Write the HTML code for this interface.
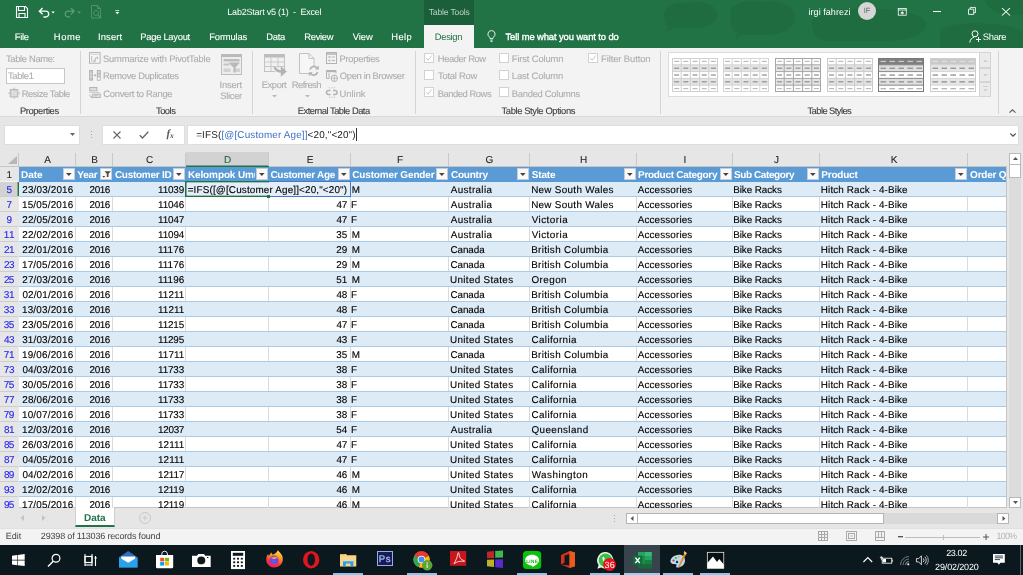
<!DOCTYPE html><html><head><meta charset="utf-8"><title>Lab2Start v5 (1) - Excel</title><style>
*{box-sizing:border-box;margin:0;padding:0}
html,body{width:1023px;height:575px;overflow:hidden;background:#e6e6e6}
body{position:relative;font-family:"Liberation Sans",Arial,sans-serif;font-size:9px;color:#444;text-rendering:geometricPrecision}
.a{position:absolute;white-space:nowrap}
.t{position:absolute;white-space:pre}
.cell{position:absolute;white-space:nowrap;font-size:10px;line-height:16px;height:14px;color:#000;letter-spacing:0;word-spacing:1px}
.hd{position:absolute;white-space:nowrap;font-size:10px;line-height:16px;height:14px;color:#fff;font-weight:bold;letter-spacing:-0.25px;overflow:hidden}
.rn{position:absolute;left:0;width:18px;text-align:center;font-size:10px;line-height:16px;height:14px;color:#2a2ae8}
.ch{position:absolute;top:153px;height:15px;line-height:15px;text-align:center;font-size:10px;color:#262626;-webkit-text-stroke:0.1px #262626}
.fb{position:absolute;width:12px;height:12px;background:#fafafa;border:1px solid #c4cdd8}

svg{position:absolute;overflow:visible}
</style></head><body><div id="root" style="position:absolute;left:0;top:0;width:1023px;height:575px;will-change:transform">
<div class="a" style="left:0;top:0;width:1023px;height:48px;background:#217346"></div>
<svg style="left:0;top:0" width="1023" height="48" viewBox="0 0 1023 48"><g fill="#1d6a3f" opacity=".75"><path d="M664 14c0-9 14-13 24-11c10-3 28 0 29 10c2 8-8 14-20 15h-24l-6 4l1-6c-3-2-4-7-4-12z"/><path d="M730 12c2-10 22-14 34-10c14-3 30 2 31 14c1 10-10 18-26 19h-28l-5 4l1-6c-5-3-8-13-7-21z"/><path d="M812 22c0-8 18-14 40-13c30-2 72 2 74 14c2 10-14 17-40 18h-60c-10 0-14-10-14-19z"/><path d="M940 30c6-6 30-8 50-6c14 0 28 4 33 8v16h-83z"/><path d="M985 0h38v14c-14 2-34 0-38-14z"/></g></svg>
<div class="a" style="left:424px;top:0;width:50px;height:25px;background:#1b5f3a"></div>
<div class="a" style="left:424px;top:25px;width:50px;height:23px;background:#f3f3f3"></div>
<div class="t" style="left:428.76px;top:6.00px;font-size:8.6px;line-height:12px;height:12px;color:#b9d2c3;letter-spacing:-0.175px;">Table Tools</div>
<div class="t" style="left:227.34px;top:6.00px;font-size:9px;line-height:12px;height:12px;color:#fff;letter-spacing:-0.212px;">Lab2Start v5 (1)  -  Excel</div>
<div class="t" style="left:808.49px;top:6.00px;font-size:9px;line-height:12px;height:12px;color:#fff;letter-spacing:0.049px;">irgi fahrezi</div>
<div class="a" style="left:858px;top:2px;width:18px;height:18px;border-radius:9px;background:#d6d6d6;color:#6a6a6a;font-size:7.5px;line-height:18px;text-align:center">IF</div>
<div class="t" style="left:14.80px;top:31.00px;font-size:9.4px;line-height:12px;height:12px;color:#fff;letter-spacing:-0.332px;-webkit-text-stroke:0.1px #fff;">File</div>
<div class="t" style="left:53.80px;top:31.00px;font-size:9.4px;line-height:12px;height:12px;color:#fff;letter-spacing:0.578px;-webkit-text-stroke:0.1px #fff;">Home</div>
<div class="t" style="left:97.91px;top:31.00px;font-size:9.4px;line-height:12px;height:12px;color:#fff;letter-spacing:0.169px;-webkit-text-stroke:0.1px #fff;">Insert</div>
<div class="t" style="left:140.30px;top:31.00px;font-size:9.4px;line-height:12px;height:12px;color:#fff;letter-spacing:-0.273px;-webkit-text-stroke:0.1px #fff;">Page Layout</div>
<div class="t" style="left:209.30px;top:31.00px;font-size:9.4px;line-height:12px;height:12px;color:#fff;letter-spacing:-0.181px;-webkit-text-stroke:0.1px #fff;">Formulas</div>
<div class="t" style="left:266.30px;top:31.00px;font-size:9.4px;line-height:12px;height:12px;color:#fff;letter-spacing:-0.268px;-webkit-text-stroke:0.1px #fff;">Data</div>
<div class="t" style="left:304.30px;top:31.00px;font-size:9.4px;line-height:12px;height:12px;color:#fff;letter-spacing:-0.322px;-webkit-text-stroke:0.1px #fff;">Review</div>
<div class="t" style="left:352.69px;top:31.00px;font-size:9.4px;line-height:12px;height:12px;color:#fff;letter-spacing:-0.048px;-webkit-text-stroke:0.1px #fff;">View</div>
<div class="t" style="left:391.30px;top:31.00px;font-size:9.4px;line-height:12px;height:12px;color:#fff;letter-spacing:0.417px;-webkit-text-stroke:0.1px #fff;">Help</div>
<div class="t" style="left:434.80px;top:31.00px;font-size:9.4px;line-height:12px;height:12px;color:#217346;letter-spacing:-0.312px;">Design</div>
<div class="t" style="left:505.50px;top:31.00px;font-size:9.4px;line-height:12px;height:12px;color:#fff;letter-spacing:-0.091px;-webkit-text-stroke:0.35px #fff;">Tell me what you want to do</div>
<div class="t" style="left:982.81px;top:31.00px;font-size:9.4px;line-height:12px;height:12px;color:#fff;letter-spacing:-0.319px;">Share</div>
<svg style="left:16px;top:6px" width="12" height="12" viewBox="0 0 12 12"><path d="M.5.5h9l2 2v9h-11z M2.5.5v4h6v-4 M3 11.500v-4h6v4" fill="none" stroke="#fff" stroke-width="1.1"/></svg>
<svg style="left:37.500px;top:7px" width="18.300" height="11" viewBox="0 0 20 12"><path d="M5 1L1.500 4.500L5 8 M1.500 4.500H8.500a3.200 3.200 0 0 1 0 6.400H6" fill="none" stroke="#fff" stroke-width="1.5"/><path d="M14.500 5h4l-2 2.200z" fill="#fff"/></svg>
<svg style="left:64px;top:7px" width="18.300" height="11" viewBox="0 0 20 12"><path d="M7.500 1L11 4.500L7.500 8 M11 4.500H4.500a3.200 3.200 0 0 0 0 6.400H6.500" fill="none" stroke="#5f9c7a" stroke-width="1.4"/><path d="M14.500 5h4l-2 2.200z" fill="#5f9c7a"/></svg>
<svg style="left:91px;top:5px" width="12" height="14" viewBox="0 0 12 14"><path d="M.5.5h6l3 3v9.500h-9z M6.500.5v3h3" fill="none" stroke="#4f9070" stroke-width="1"/><circle cx="5" cy="8" r="2.500" fill="none" stroke="#4f9070"/><path d="M7 10l3 3" stroke="#4f9070" stroke-width="1.200"/></svg>
<svg style="left:115px;top:10px" width="4.600" height="5" viewBox="0 0 6 6"><path d="M.5.5h5" stroke="#fff" stroke-width="1"/><path d="M.5 2.500h5l-2.500 2.800z" fill="#fff"/></svg>
<svg style="left:896.500px;top:7.500px" width="10.500" height="8" viewBox="0 0 11 10"><rect x=".5" y=".5" width="10" height="8.500" fill="none" stroke="#fff"/><path d="M.5 2.500h10" stroke="#fff"/><path d="M3.500 6.500L5.500 4.500L7.500 6.500z M5.500 5v3.500" fill="#fff" stroke="#fff" stroke-width=".8"/></svg>
<div class="a" style="left:933px;top:11px;width:8px;height:1px;background:#fff"></div>
<svg style="left:967.500px;top:7.300px" width="8" height="7.800" viewBox="0 0 9 9"><path d="M.5 2.500h6v6h-6z M2.500 2.500v-2h6v6h-2" fill="none" stroke="#fff" stroke-width="1"/></svg>
<svg style="left:1002px;top:7.600px" width="8" height="7.500" viewBox="0 0 8 8" preserveAspectRatio="none"><path d="M0 0L8 8M8 0L0 8" stroke="#fff" stroke-width="1.1"/></svg>
<svg style="left:486.700px;top:30.300px" width="9" height="12.500" viewBox="0 0 9 13"><path d="M4.500.6a3.700 3.700 0 0 0-2.200 6.700c.5.500.7 1 .7 1.700h3c0-.7.200-1.200.7-1.700A3.700 3.700 0 0 0 4.500.6z M3.200 10.500h2.600 M3.500 12h2" fill="none" stroke="#fff" stroke-width=".9"/></svg>
<svg style="left:969px;top:30px" width="13" height="13" viewBox="0 0 13 13"><circle cx="6" cy="3.800" r="3" fill="none" stroke="#fff"/><path d="M.8 12.500c.3-3 2-4.800 4.200-5.200 M9.500 7v5 M7 9.500h5" fill="none" stroke="#fff"/></svg>
<div class="a" style="left:0;top:48px;width:1023px;height:69px;background:#f3f3f3;border-bottom:1px solid #dadada"></div>
<div class="a" style="left:80px;top:51px;width:1px;height:63px;background:#d4d4d4"></div>
<div class="a" style="left:252px;top:51px;width:1px;height:63px;background:#d4d4d4"></div>
<div class="a" style="left:415px;top:51px;width:1px;height:63px;background:#d4d4d4"></div>
<div class="a" style="left:660px;top:51px;width:1px;height:63px;background:#d4d4d4"></div>
<div class="a" style="left:998px;top:51px;width:1px;height:63px;background:#d4d4d4"></div>
<div class="t" style="left:6.00px;top:53.00px;font-size:9.4px;line-height:12px;height:12px;color:#adadad;letter-spacing:-0.344px;-webkit-text-stroke:0.1px #adadad;">Table Name:</div>
<div class="a" style="left:6px;top:68px;width:59px;height:16px;background:#fff;border:1px solid #c8c8c8"></div>
<div class="t" style="left:8.00px;top:70.00px;font-size:9.4px;line-height:12px;height:12px;color:#adadad;letter-spacing:-0.348px;-webkit-text-stroke:0.1px #adadad;">Table1</div>
<div class="t" style="left:21.80px;top:88.00px;font-size:9.4px;line-height:12px;height:12px;color:#adadad;letter-spacing:-0.456px;-webkit-text-stroke:0.1px #adadad;">Resize Table</div>
<div class="t" style="left:19.90px;top:105.00px;font-size:9.4px;line-height:12px;height:12px;color:#404040;letter-spacing:-0.394px;-webkit-text-stroke:0.12px #444;">Properties</div>
<svg style="left:8px;top:86.500px" width="13" height="12" viewBox="0 0 13 12"><rect x="2.300" y="2.500" width="7.600" height="7.500" fill="#d0d0d0" stroke="#b8b8b8" stroke-width=".9"/><path d="M4.300 4v5M6.100 4v5M7.900 4v5" stroke="#ececec" stroke-width=".8"/><path d="M0 6.200l1.800-1.300v2.600z M12.300 6.200l-1.600-1.200v2.400z M6.100 .3l1.300 1.500h-2.600z M6.100 12l1.300-1.500h-2.600z" fill="#bdbdbd"/></svg>
<div class="t" style="left:103.01px;top:53.00px;font-size:9.4px;line-height:12px;height:12px;color:#adadad;letter-spacing:-0.205px;-webkit-text-stroke:0.1px #adadad;">Summarize with PivotTable</div>
<div class="t" style="left:103.00px;top:70.00px;font-size:9.4px;line-height:12px;height:12px;color:#adadad;letter-spacing:-0.329px;-webkit-text-stroke:0.1px #adadad;">Remove Duplicates</div>
<div class="t" style="left:103.31px;top:88.00px;font-size:9.4px;line-height:12px;height:12px;color:#adadad;letter-spacing:-0.282px;-webkit-text-stroke:0.1px #adadad;">Convert to Range</div>
<div class="t" style="left:156.00px;top:105.00px;font-size:9.4px;line-height:12px;height:12px;color:#404040;letter-spacing:-0.515px;-webkit-text-stroke:0.12px #444;">Tools</div>
<svg style="left:89px;top:52.400px" width="11.600" height="11.800" viewBox="0 0 12 12"><rect x=".5" y=".5" width="11" height="11" fill="#f7f7f7" stroke="#b3b3b3"/><path d="M2 2.300h8" stroke="#c2c2c2" stroke-width="1" stroke-dasharray="1.500 .7"/><path d="M2.800 4v6" stroke="#c2c2c2" stroke-width="1.200"/><path d="M4.500 9.500h2v-3.500h3" fill="none" stroke="#b3b3b3" stroke-width=".9"/><path d="M8.600 4.600v2.800M5.500 8v2.600" stroke="#b3b3b3" stroke-width=".9"/></svg>
<svg style="left:89px;top:70.200px" width="11.800" height="10.600" viewBox="0 0 12 11"><rect x=".5" y=".5" width="3" height="10" fill="#c9c9c9" stroke="#b3b3b3"/><path d="M.5 3.800h3M.5 7.200h3" stroke="#e4e4e4" stroke-width=".8"/><rect x="8.500" y=".5" width="3" height="10" fill="#d6d6d6" stroke="#b3b3b3"/><rect x="9" y="7.500" width="2" height="2.500" fill="#fff"/><path d="M8.500 3.800h3M8.500 7.200h3" stroke="#b3b3b3" stroke-width=".8"/><path d="M5 5.500h2.500M6.200 4.200v2.600" stroke="#b3b3b3" stroke-width=".9"/></svg>
<svg style="left:89px;top:87px" width="12" height="11.500" viewBox="0 0 12 12"><rect x=".5" y=".5" width="7.500" height="3.500" fill="#d9d9d9" stroke="#b3b3b3"/><path d="M2 2.200h1.500M5 2.200l1 1l1-1" stroke="#f3f3f3" stroke-width=".8" fill="none"/><path d="M0 5.800h11" stroke="#c8c8c8" stroke-width=".9"/><rect x="3.500" y="7.500" width="8" height="3.500" fill="#e6e6e6" stroke="#b3b3b3"/><path d="M5 9.200h4" stroke="#b3b3b3" stroke-width=".9"/><path d="M.6 8c0 2 .8 2.600 2.400 2.600M2 9.500l1.200 1.100l-1.200 1.100" stroke="#b3b3b3" stroke-width=".9" fill="none"/></svg>
<svg style="left:221px;top:54px" width="21" height="21" viewBox="0 0 21 21"><rect x=".5" y=".5" width="20" height="20" fill="#ededed" stroke="#bdbdbd"/><rect x=".5" y=".5" width="20" height="2.500" fill="#b9b9b9"/><rect x="2.500" y="5" width="16" height="2.500" fill="#bdbdbd"/><rect x="2.500" y="9.500" width="6" height="2" fill="#c4c4c4"/><rect x="2.500" y="14.500" width="7" height="3.500" fill="#d2d2d2"/><rect x="14" y="14.500" width="5" height="3.500" fill="#d2d2d2"/><path d="M7.500 8.500h11.500l-4.500 5v5h-2v-5z" fill="#b9b9b9"/></svg>
<div class="t" style="left:219.51px;top:79.00px;font-size:9.4px;line-height:12px;height:12px;color:#adadad;letter-spacing:-0.151px;-webkit-text-stroke:0.1px #adadad;">Insert</div>
<div class="t" style="left:220.31px;top:90.00px;font-size:9.4px;line-height:12px;height:12px;color:#adadad;letter-spacing:-0.304px;-webkit-text-stroke:0.1px #adadad;">Slicer</div>
<svg style="left:264px;top:54px" width="23" height="22" viewBox="0 0 23 22"><rect x=".5" y=".5" width="20" height="17" fill="#f1f1f1" stroke="#c2c2c2"/><rect x=".5" y=".5" width="20" height="3" fill="#bcbcbc"/><path d="M.5 8h20M.5 12.500h20M7 3.500v14M14 3.500v14" stroke="#c9c9c9"/><path d="M10.500 13c1.500 3.800 4 4.800 8 4.500" fill="none" stroke="#f3f3f3" stroke-width="4.500"/><path d="M10.500 13c1.500 3.800 4 4.800 8 4.500" fill="none" stroke="#b2b2b2" stroke-width="2.300"/><path d="M16.800 12.300l6 5.200l-6 5.200z" fill="#b2b2b2"/></svg>
<div class="t" style="left:261.80px;top:79.00px;font-size:9.4px;line-height:12px;height:12px;color:#adadad;letter-spacing:-0.440px;-webkit-text-stroke:0.1px #adadad;">Export</div>
<svg style="left:272px;top:95px" width="5" height="3" viewBox="0 0 5 3"><path d="M0 0h5l-2.500 2.500z" fill="#b9b9b9"/></svg>
<svg style="left:299px;top:53px" width="21" height="24" viewBox="0 0 21 24"><path d="M.5.500h9.500l5 5v15h-14.500z" fill="#f6f6f6" stroke="#c2c2c2"/><path d="M10 .5v5h5" fill="none" stroke="#c2c2c2"/><circle cx="14.800" cy="17.700" r="4.800" fill="#f3f3f3"/><path d="M11 16.500a4 4 0 0 1 7-1.500 M18.600 19a4 4 0 0 1-7 1.500" fill="none" stroke="#b3b3b3" stroke-width="1.700"/><path d="M19.800 12.500v4h-4z M9.800 23.200v-4h4z" fill="#b3b3b3"/></svg>
<div class="t" style="left:291.80px;top:79.00px;font-size:9.4px;line-height:12px;height:12px;color:#adadad;letter-spacing:-0.520px;-webkit-text-stroke:0.1px #adadad;">Refresh</div>
<svg style="left:304.500px;top:95px" width="5" height="3" viewBox="0 0 5 3"><path d="M0 0h5l-2.500 2.500z" fill="#b9b9b9"/></svg>
<svg style="left:326px;top:52px" width="11" height="12" viewBox="0 0 11 12"><rect x=".5" y=".5" width="10" height="11" fill="none" stroke="#b3b3b3"/><path d="M.5 2h10" stroke="#b3b3b3" stroke-width="1.500"/><path d="M2.500 5h2M2.500 8.500h2" stroke="#b3b3b3" stroke-width="1.600"/><path d="M5.800 5h3M5.800 8.500h3" stroke="#b3b3b3"/></svg>
<div class="t" style="left:339.50px;top:53.00px;font-size:9.4px;line-height:12px;height:12px;color:#adadad;letter-spacing:-0.272px;-webkit-text-stroke:0.1px #adadad;">Properties</div>
<svg style="left:326px;top:70px" width="12" height="12" viewBox="0 0 12 12"><path d="M.5 8.500v-8h9.500v3" fill="none" stroke="#b3b3b3"/><path d="M.5 1.500h9.500" stroke="#b3b3b3" stroke-width="1.500"/><path d="M3 3v5.500H.5" fill="none" stroke="#b3b3b3"/><circle cx="8.300" cy="8.300" r="3.200" fill="#f3f3f3" stroke="#b3b3b3"/><path d="M5.100 8.300h6.400M8.300 5.100v6.400" stroke="#b3b3b3" stroke-width=".8"/></svg>
<div class="t" style="left:339.84px;top:70.00px;font-size:9.4px;line-height:12px;height:12px;color:#adadad;letter-spacing:-0.344px;-webkit-text-stroke:0.1px #adadad;">Open in Browser</div>
<svg style="left:326px;top:87px" width="12" height="11" viewBox="0 0 12 11"><path d="M4.500 3.500h-2a2 2 0 0 0 0 4h2 M7 3.500h2a2 2 0 0 1 0 4h-2" fill="none" stroke="#b3b3b3" stroke-width="1.600"/><path d="M4 1.500L3 0M6 1.300V0M8 1.500L9 0M4 9.500L3 11M6 9.700V11M8 9.500L9 11" stroke="#c0c0c0" stroke-width=".9"/></svg>
<div class="t" style="left:339.56px;top:88.00px;font-size:9.4px;line-height:12px;height:12px;color:#adadad;letter-spacing:-0.013px;-webkit-text-stroke:0.1px #adadad;">Unlink</div>
<div class="t" style="left:297.80px;top:105.00px;font-size:9.4px;line-height:12px;height:12px;color:#404040;letter-spacing:-0.517px;-webkit-text-stroke:0.12px #444;">External Table Data</div>
<div class="a" style="left:424px;top:53px;width:10px;height:10px;background:#fff;border:1px solid #d2d2d2"></div>
<svg style="left:424px;top:53px" width="10" height="10" viewBox="0 0 10 10"><path d="M2.200 5.200L4 7.200L7.800 2.500" fill="none" stroke="#c4c4c4" stroke-width="1"/></svg>
<div class="a" style="left:424px;top:70px;width:10px;height:10px;background:#fff;border:1px solid #d2d2d2"></div>
<div class="a" style="left:424px;top:87px;width:10px;height:10px;background:#fff;border:1px solid #d2d2d2"></div>
<svg style="left:424px;top:87px" width="10" height="10" viewBox="0 0 10 10"><path d="M2.200 5.200L4 7.200L7.800 2.500" fill="none" stroke="#c4c4c4" stroke-width="1"/></svg>
<div class="t" style="left:437.80px;top:53.00px;font-size:9.4px;line-height:12px;height:12px;color:#adadad;letter-spacing:-0.421px;-webkit-text-stroke:0.1px #adadad;">Header Row</div>
<div class="t" style="left:438.00px;top:70.00px;font-size:9.4px;line-height:12px;height:12px;color:#adadad;letter-spacing:-0.245px;-webkit-text-stroke:0.1px #adadad;">Total Row</div>
<div class="t" style="left:437.80px;top:88.00px;font-size:9.4px;line-height:12px;height:12px;color:#adadad;letter-spacing:-0.460px;-webkit-text-stroke:0.1px #adadad;">Banded Rows</div>
<div class="a" style="left:499px;top:53px;width:10px;height:10px;background:#fff;border:1px solid #d2d2d2"></div>
<div class="a" style="left:499px;top:70px;width:10px;height:10px;background:#fff;border:1px solid #d2d2d2"></div>
<div class="a" style="left:499px;top:87px;width:10px;height:10px;background:#fff;border:1px solid #d2d2d2"></div>
<div class="t" style="left:511.80px;top:53.00px;font-size:9.4px;line-height:12px;height:12px;color:#adadad;letter-spacing:-0.142px;-webkit-text-stroke:0.1px #adadad;">First Column</div>
<div class="t" style="left:511.80px;top:70.00px;font-size:9.4px;line-height:12px;height:12px;color:#adadad;letter-spacing:-0.122px;-webkit-text-stroke:0.1px #adadad;">Last Column</div>
<div class="t" style="left:511.80px;top:88.00px;font-size:9.4px;line-height:12px;height:12px;color:#adadad;letter-spacing:-0.266px;-webkit-text-stroke:0.1px #adadad;">Banded Columns</div>
<div class="a" style="left:588px;top:53px;width:10px;height:10px;background:#fff;border:1px solid #d2d2d2"></div>
<svg style="left:588px;top:53px" width="10" height="10" viewBox="0 0 10 10"><path d="M2.200 5.200L4 7.200L7.800 2.500" fill="none" stroke="#c4c4c4" stroke-width="1"/></svg>
<div class="t" style="left:601.00px;top:53.00px;font-size:9.4px;line-height:12px;height:12px;color:#adadad;letter-spacing:-0.083px;-webkit-text-stroke:0.1px #adadad;">Filter Button</div>
<div class="t" style="left:501.50px;top:105.00px;font-size:9.4px;line-height:12px;height:12px;color:#404040;letter-spacing:-0.381px;-webkit-text-stroke:0.12px #444;">Table Style Options</div>
<div class="a" style="left:668px;top:52px;width:323px;height:45px;background:#fff;border:1px solid #dcdcdc"></div>
<svg style="left:672px;top:58px" width="46" height="34" viewBox="0 0 46 34"><rect x="0" y="6.8" width="46" height="6.8" fill="#e4e4e4"/><rect x="0" y="20.4" width="46" height="6.8" fill="#e4e4e4"/><path d="M0 0.5h46" stroke="#d0d0d0" stroke-width="1"/><path d="M0 6.8h46" stroke="#d0d0d0" stroke-width="1"/><path d="M0 13.6h46" stroke="#d0d0d0" stroke-width="1"/><path d="M0 20.4h46" stroke="#d0d0d0" stroke-width="1"/><path d="M0 27.2h46" stroke="#d0d0d0" stroke-width="1"/><path d="M0 33.5h46" stroke="#d0d0d0" stroke-width="1"/><path d="M0.5 0v34" stroke="#d0d0d0" stroke-width="1"/><path d="M9.2 0v34" stroke="#d0d0d0" stroke-width="1"/><path d="M18.4 0v34" stroke="#d0d0d0" stroke-width="1"/><path d="M27.6 0v34" stroke="#d0d0d0" stroke-width="1"/><path d="M36.8 0v34" stroke="#d0d0d0" stroke-width="1"/><path d="M45.5 0v34" stroke="#d0d0d0" stroke-width="1"/><rect x="2.1" y="2.8" width="5" height="1.200" fill="#bdbdbd"/><rect x="11.3" y="2.8" width="5" height="1.200" fill="#bdbdbd"/><rect x="20.5" y="2.8" width="5" height="1.200" fill="#bdbdbd"/><rect x="29.7" y="2.8" width="5" height="1.200" fill="#bdbdbd"/><rect x="38.9" y="2.8" width="5" height="1.200" fill="#bdbdbd"/><rect x="2.1" y="9.6" width="5" height="1.200" fill="#8f8f8f"/><rect x="11.3" y="9.6" width="5" height="1.200" fill="#8f8f8f"/><rect x="20.5" y="9.6" width="5" height="1.200" fill="#8f8f8f"/><rect x="29.7" y="9.6" width="5" height="1.200" fill="#8f8f8f"/><rect x="38.9" y="9.6" width="5" height="1.200" fill="#8f8f8f"/><rect x="2.1" y="16.4" width="5" height="1.200" fill="#8f8f8f"/><rect x="11.3" y="16.4" width="5" height="1.200" fill="#8f8f8f"/><rect x="20.5" y="16.4" width="5" height="1.200" fill="#8f8f8f"/><rect x="29.7" y="16.4" width="5" height="1.200" fill="#8f8f8f"/><rect x="38.9" y="16.4" width="5" height="1.200" fill="#8f8f8f"/><rect x="2.1" y="23.2" width="5" height="1.200" fill="#8f8f8f"/><rect x="11.3" y="23.2" width="5" height="1.200" fill="#8f8f8f"/><rect x="20.5" y="23.2" width="5" height="1.200" fill="#8f8f8f"/><rect x="29.7" y="23.2" width="5" height="1.200" fill="#8f8f8f"/><rect x="38.9" y="23.2" width="5" height="1.200" fill="#8f8f8f"/><rect x="2.1" y="30.0" width="5" height="1.200" fill="#bdbdbd"/><rect x="11.3" y="30.0" width="5" height="1.200" fill="#bdbdbd"/><rect x="20.5" y="30.0" width="5" height="1.200" fill="#bdbdbd"/><rect x="29.7" y="30.0" width="5" height="1.200" fill="#bdbdbd"/><rect x="38.9" y="30.0" width="5" height="1.200" fill="#bdbdbd"/></svg>
<svg style="left:723px;top:58px" width="46" height="34" viewBox="0 0 46 34"><rect x="0" y="6.8" width="46" height="6.8" fill="#e4e4e4"/><rect x="0" y="20.4" width="46" height="6.8" fill="#e4e4e4"/><rect x="0" y="0" width="46" height="34" fill="none"/><path d="M0 0.5h46" stroke="#d6d6d6" stroke-width="1"/><path d="M0 6.8h46" stroke="#d6d6d6" stroke-width="1"/><path d="M0 13.6h46" stroke="#d6d6d6" stroke-width="1"/><path d="M0 20.4h46" stroke="#d6d6d6" stroke-width="1"/><path d="M0 27.2h46" stroke="#d6d6d6" stroke-width="1"/><path d="M0 33.5h46" stroke="#d6d6d6" stroke-width="1"/><path d="M0.5 0v34" stroke="#d6d6d6" stroke-width="1"/><path d="M9.2 0v34" stroke="#d6d6d6" stroke-width="1"/><path d="M18.4 0v34" stroke="#d6d6d6" stroke-width="1"/><path d="M27.6 0v34" stroke="#d6d6d6" stroke-width="1"/><path d="M36.8 0v34" stroke="#d6d6d6" stroke-width="1"/><path d="M45.5 0v34" stroke="#d6d6d6" stroke-width="1"/><rect x="2.1" y="2.8" width="5" height="1.200" fill="#bdbdbd"/><rect x="11.3" y="2.8" width="5" height="1.200" fill="#bdbdbd"/><rect x="20.5" y="2.8" width="5" height="1.200" fill="#bdbdbd"/><rect x="29.7" y="2.8" width="5" height="1.200" fill="#bdbdbd"/><rect x="38.9" y="2.8" width="5" height="1.200" fill="#bdbdbd"/><rect x="2.1" y="9.6" width="5" height="1.200" fill="#8f8f8f"/><rect x="11.3" y="9.6" width="5" height="1.200" fill="#8f8f8f"/><rect x="20.5" y="9.6" width="5" height="1.200" fill="#8f8f8f"/><rect x="29.7" y="9.6" width="5" height="1.200" fill="#8f8f8f"/><rect x="38.9" y="9.6" width="5" height="1.200" fill="#8f8f8f"/><rect x="2.1" y="16.4" width="5" height="1.200" fill="#8f8f8f"/><rect x="11.3" y="16.4" width="5" height="1.200" fill="#8f8f8f"/><rect x="20.5" y="16.4" width="5" height="1.200" fill="#8f8f8f"/><rect x="29.7" y="16.4" width="5" height="1.200" fill="#8f8f8f"/><rect x="38.9" y="16.4" width="5" height="1.200" fill="#8f8f8f"/><rect x="2.1" y="23.2" width="5" height="1.200" fill="#8f8f8f"/><rect x="11.3" y="23.2" width="5" height="1.200" fill="#8f8f8f"/><rect x="20.5" y="23.2" width="5" height="1.200" fill="#8f8f8f"/><rect x="29.7" y="23.2" width="5" height="1.200" fill="#8f8f8f"/><rect x="38.9" y="23.2" width="5" height="1.200" fill="#8f8f8f"/><rect x="2.1" y="30.0" width="5" height="1.200" fill="#bdbdbd"/><rect x="11.3" y="30.0" width="5" height="1.200" fill="#bdbdbd"/><rect x="20.5" y="30.0" width="5" height="1.200" fill="#bdbdbd"/><rect x="29.7" y="30.0" width="5" height="1.200" fill="#bdbdbd"/><rect x="38.9" y="30.0" width="5" height="1.200" fill="#bdbdbd"/></svg>
<svg style="left:775px;top:58px" width="46" height="34" viewBox="0 0 46 34"><rect x="0" y="6.8" width="46" height="6.8" fill="#e4e4e4"/><rect x="0" y="20.4" width="46" height="6.8" fill="#e4e4e4"/><path d="M0 0.5h46" stroke="#a6a6a6" stroke-width="1"/><path d="M0 6.8h46" stroke="#a6a6a6" stroke-width="1"/><path d="M0 13.6h46" stroke="#a6a6a6" stroke-width="1"/><path d="M0 20.4h46" stroke="#a6a6a6" stroke-width="1"/><path d="M0 27.2h46" stroke="#a6a6a6" stroke-width="1"/><path d="M0 33.5h46" stroke="#a6a6a6" stroke-width="1"/><path d="M0.5 0v34" stroke="#a6a6a6" stroke-width="1"/><path d="M9.2 0v34" stroke="#a6a6a6" stroke-width="1"/><path d="M18.4 0v34" stroke="#a6a6a6" stroke-width="1"/><path d="M27.6 0v34" stroke="#a6a6a6" stroke-width="1"/><path d="M36.8 0v34" stroke="#a6a6a6" stroke-width="1"/><path d="M45.5 0v34" stroke="#a6a6a6" stroke-width="1"/><rect x="2.1" y="2.8" width="5" height="1.200" fill="#bdbdbd"/><rect x="11.3" y="2.8" width="5" height="1.200" fill="#bdbdbd"/><rect x="20.5" y="2.8" width="5" height="1.200" fill="#bdbdbd"/><rect x="29.7" y="2.8" width="5" height="1.200" fill="#bdbdbd"/><rect x="38.9" y="2.8" width="5" height="1.200" fill="#bdbdbd"/><rect x="2.1" y="9.6" width="5" height="1.200" fill="#8f8f8f"/><rect x="11.3" y="9.6" width="5" height="1.200" fill="#8f8f8f"/><rect x="20.5" y="9.6" width="5" height="1.200" fill="#8f8f8f"/><rect x="29.7" y="9.6" width="5" height="1.200" fill="#8f8f8f"/><rect x="38.9" y="9.6" width="5" height="1.200" fill="#8f8f8f"/><rect x="2.1" y="16.4" width="5" height="1.200" fill="#8f8f8f"/><rect x="11.3" y="16.4" width="5" height="1.200" fill="#8f8f8f"/><rect x="20.5" y="16.4" width="5" height="1.200" fill="#8f8f8f"/><rect x="29.7" y="16.4" width="5" height="1.200" fill="#8f8f8f"/><rect x="38.9" y="16.4" width="5" height="1.200" fill="#8f8f8f"/><rect x="2.1" y="23.2" width="5" height="1.200" fill="#8f8f8f"/><rect x="11.3" y="23.2" width="5" height="1.200" fill="#8f8f8f"/><rect x="20.5" y="23.2" width="5" height="1.200" fill="#8f8f8f"/><rect x="29.7" y="23.2" width="5" height="1.200" fill="#8f8f8f"/><rect x="38.9" y="23.2" width="5" height="1.200" fill="#8f8f8f"/><rect x="2.1" y="30.0" width="5" height="1.200" fill="#bdbdbd"/><rect x="11.3" y="30.0" width="5" height="1.200" fill="#bdbdbd"/><rect x="20.5" y="30.0" width="5" height="1.200" fill="#bdbdbd"/><rect x="29.7" y="30.0" width="5" height="1.200" fill="#bdbdbd"/><rect x="38.9" y="30.0" width="5" height="1.200" fill="#bdbdbd"/></svg>
<svg style="left:827px;top:58px" width="46" height="34" viewBox="0 0 46 34"><rect x="0" y="6.8" width="46" height="6.8" fill="#e4e4e4"/><rect x="0" y="20.4" width="46" height="6.8" fill="#e4e4e4"/><rect x="0" y="0" width="46" height="34" fill="none"/><path d="M0 0.5h46" stroke="#cacaca" stroke-width="1"/><path d="M0 6.8h46" stroke="#cacaca" stroke-width="1"/><path d="M0 13.6h46" stroke="#cacaca" stroke-width="1"/><path d="M0 20.4h46" stroke="#cacaca" stroke-width="1"/><path d="M0 27.2h46" stroke="#cacaca" stroke-width="1"/><path d="M0 33.5h46" stroke="#cacaca" stroke-width="1"/><path d="M0.5 0v34" stroke="#cacaca" stroke-width="1"/><path d="M9.2 0v34" stroke="#cacaca" stroke-width="1"/><path d="M18.4 0v34" stroke="#cacaca" stroke-width="1"/><path d="M27.6 0v34" stroke="#cacaca" stroke-width="1"/><path d="M36.8 0v34" stroke="#cacaca" stroke-width="1"/><path d="M45.5 0v34" stroke="#cacaca" stroke-width="1"/><rect x="2.1" y="2.8" width="5" height="1.200" fill="#bdbdbd"/><rect x="11.3" y="2.8" width="5" height="1.200" fill="#bdbdbd"/><rect x="20.5" y="2.8" width="5" height="1.200" fill="#bdbdbd"/><rect x="29.7" y="2.8" width="5" height="1.200" fill="#bdbdbd"/><rect x="38.9" y="2.8" width="5" height="1.200" fill="#bdbdbd"/><rect x="2.1" y="9.6" width="5" height="1.200" fill="#8f8f8f"/><rect x="11.3" y="9.6" width="5" height="1.200" fill="#8f8f8f"/><rect x="20.5" y="9.6" width="5" height="1.200" fill="#8f8f8f"/><rect x="29.7" y="9.6" width="5" height="1.200" fill="#8f8f8f"/><rect x="38.9" y="9.6" width="5" height="1.200" fill="#8f8f8f"/><rect x="2.1" y="16.4" width="5" height="1.200" fill="#8f8f8f"/><rect x="11.3" y="16.4" width="5" height="1.200" fill="#8f8f8f"/><rect x="20.5" y="16.4" width="5" height="1.200" fill="#8f8f8f"/><rect x="29.7" y="16.4" width="5" height="1.200" fill="#8f8f8f"/><rect x="38.9" y="16.4" width="5" height="1.200" fill="#8f8f8f"/><rect x="2.1" y="23.2" width="5" height="1.200" fill="#8f8f8f"/><rect x="11.3" y="23.2" width="5" height="1.200" fill="#8f8f8f"/><rect x="20.5" y="23.2" width="5" height="1.200" fill="#8f8f8f"/><rect x="29.7" y="23.2" width="5" height="1.200" fill="#8f8f8f"/><rect x="38.9" y="23.2" width="5" height="1.200" fill="#8f8f8f"/><rect x="2.1" y="30.0" width="5" height="1.200" fill="#bdbdbd"/><rect x="11.3" y="30.0" width="5" height="1.200" fill="#bdbdbd"/><rect x="20.5" y="30.0" width="5" height="1.200" fill="#bdbdbd"/><rect x="29.7" y="30.0" width="5" height="1.200" fill="#bdbdbd"/><rect x="38.9" y="30.0" width="5" height="1.200" fill="#bdbdbd"/></svg>
<svg style="left:878px;top:58px" width="46" height="34" viewBox="0 0 46 34"><rect x="0" y="0" width="46" height="7" fill="#7f7f7f"/><rect x="0" y="6.8" width="46" height="6.8" fill="#dedede"/><rect x="0" y="20.4" width="46" height="6.8" fill="#dedede"/><path d="M0 6.8h46" stroke="#8a8a8a" stroke-width="1"/><path d="M0 13.6h46" stroke="#8a8a8a" stroke-width="1"/><path d="M0 20.4h46" stroke="#8a8a8a" stroke-width="1"/><path d="M0 27.2h46" stroke="#8a8a8a" stroke-width="1"/><rect x=".5" y=".5" width="45" height="33" fill="none" stroke="#777"/><rect x="2.5" y="2.8" width="5.500" height="1.300" fill="#c8c8c8"/><rect x="11.5" y="2.8" width="5.500" height="1.300" fill="#c8c8c8"/><rect x="20.5" y="2.8" width="5.500" height="1.300" fill="#c8c8c8"/><rect x="29.5" y="2.8" width="5.500" height="1.300" fill="#c8c8c8"/><rect x="38.5" y="2.8" width="5.500" height="1.300" fill="#c8c8c8"/><rect x="2.5" y="9.6" width="5.500" height="1.300" fill="#8f8f8f"/><rect x="11.5" y="9.6" width="5.500" height="1.300" fill="#8f8f8f"/><rect x="20.5" y="9.6" width="5.500" height="1.300" fill="#8f8f8f"/><rect x="29.5" y="9.6" width="5.500" height="1.300" fill="#8f8f8f"/><rect x="38.5" y="9.6" width="5.500" height="1.300" fill="#8f8f8f"/><rect x="2.5" y="16.4" width="5.500" height="1.300" fill="#8f8f8f"/><rect x="11.5" y="16.4" width="5.500" height="1.300" fill="#8f8f8f"/><rect x="20.5" y="16.4" width="5.500" height="1.300" fill="#8f8f8f"/><rect x="29.5" y="16.4" width="5.500" height="1.300" fill="#8f8f8f"/><rect x="38.5" y="16.4" width="5.500" height="1.300" fill="#8f8f8f"/><rect x="2.5" y="23.2" width="5.500" height="1.300" fill="#8f8f8f"/><rect x="11.5" y="23.2" width="5.500" height="1.300" fill="#8f8f8f"/><rect x="20.5" y="23.2" width="5.500" height="1.300" fill="#8f8f8f"/><rect x="29.5" y="23.2" width="5.500" height="1.300" fill="#8f8f8f"/><rect x="38.5" y="23.2" width="5.500" height="1.300" fill="#8f8f8f"/><rect x="2.5" y="30.0" width="5.500" height="1.300" fill="#b5b5b5"/><rect x="11.5" y="30.0" width="5.500" height="1.300" fill="#b5b5b5"/><rect x="20.5" y="30.0" width="5.500" height="1.300" fill="#b5b5b5"/><rect x="29.5" y="30.0" width="5.500" height="1.300" fill="#b5b5b5"/><rect x="38.5" y="30.0" width="5.500" height="1.300" fill="#b5b5b5"/></svg>
<svg style="left:930px;top:58px" width="46" height="34" viewBox="0 0 46 34"><rect x="0" y="0" width="46" height="7" fill="#c8c8c8"/><rect x="0" y="6.8" width="46" height="6.8" fill="#e6e6e6"/><rect x="0" y="20.4" width="46" height="6.8" fill="#e6e6e6"/><path d="M0 6.8h46" stroke="#d6d6d6" stroke-width="1"/><path d="M0 13.6h46" stroke="#d6d6d6" stroke-width="1"/><path d="M0 20.4h46" stroke="#d6d6d6" stroke-width="1"/><path d="M0 27.2h46" stroke="#d6d6d6" stroke-width="1"/><rect x=".5" y=".5" width="45" height="33" fill="none" stroke="#cdcdcd"/><rect x="2.5" y="2.8" width="5.500" height="1.300" fill="#dedede"/><rect x="11.5" y="2.8" width="5.500" height="1.300" fill="#dedede"/><rect x="20.5" y="2.8" width="5.500" height="1.300" fill="#dedede"/><rect x="29.5" y="2.8" width="5.500" height="1.300" fill="#dedede"/><rect x="38.5" y="2.8" width="5.500" height="1.300" fill="#dedede"/><rect x="2.5" y="9.6" width="5.500" height="1.300" fill="#8f8f8f"/><rect x="11.5" y="9.6" width="5.500" height="1.300" fill="#8f8f8f"/><rect x="20.5" y="9.6" width="5.500" height="1.300" fill="#8f8f8f"/><rect x="29.5" y="9.6" width="5.500" height="1.300" fill="#8f8f8f"/><rect x="38.5" y="9.6" width="5.500" height="1.300" fill="#8f8f8f"/><rect x="2.5" y="16.4" width="5.500" height="1.300" fill="#8f8f8f"/><rect x="11.5" y="16.4" width="5.500" height="1.300" fill="#8f8f8f"/><rect x="20.5" y="16.4" width="5.500" height="1.300" fill="#8f8f8f"/><rect x="29.5" y="16.4" width="5.500" height="1.300" fill="#8f8f8f"/><rect x="38.5" y="16.4" width="5.500" height="1.300" fill="#8f8f8f"/><rect x="2.5" y="23.2" width="5.500" height="1.300" fill="#8f8f8f"/><rect x="11.5" y="23.2" width="5.500" height="1.300" fill="#8f8f8f"/><rect x="20.5" y="23.2" width="5.500" height="1.300" fill="#8f8f8f"/><rect x="29.5" y="23.2" width="5.500" height="1.300" fill="#8f8f8f"/><rect x="38.5" y="23.2" width="5.500" height="1.300" fill="#8f8f8f"/><rect x="2.5" y="30.0" width="5.500" height="1.300" fill="#b5b5b5"/><rect x="11.5" y="30.0" width="5.500" height="1.300" fill="#b5b5b5"/><rect x="20.5" y="30.0" width="5.500" height="1.300" fill="#b5b5b5"/><rect x="29.5" y="30.0" width="5.500" height="1.300" fill="#b5b5b5"/><rect x="38.5" y="30.0" width="5.500" height="1.300" fill="#b5b5b5"/></svg>
<div class="a" style="left:979px;top:52px;width:12px;height:16px;background:#ebebeb;border:1px solid #d4d4d4"></div>
<div class="a" style="left:979px;top:68px;width:12px;height:14px;background:#ebebeb;border:1px solid #d4d4d4"></div>
<div class="a" style="left:979px;top:82px;width:12px;height:15px;background:#ebebeb;border:1px solid #d4d4d4"></div>
<svg style="left:983px;top:59px" width="5" height="3" viewBox="0 0 5 3"><path d="M0 3L2.500 .5L5 3" fill="#cfcfcf"/></svg>
<svg style="left:983px;top:74px" width="5" height="3" viewBox="0 0 5 3"><path d="M0 0L2.500 2.500L5 0" fill="#cfcfcf"/></svg>
<svg style="left:983px;top:86px" width="5" height="6" viewBox="0 0 5 6"><path d="M0 .5h5" stroke="#cfcfcf"/><path d="M0 3L2.500 5.500L5 3" fill="#cfcfcf"/></svg>
<div class="t" style="left:807.50px;top:105.00px;font-size:9.4px;line-height:12px;height:12px;color:#404040;letter-spacing:-0.573px;-webkit-text-stroke:0.12px #444;">Table Styles</div>
<svg style="left:1008.500px;top:108.500px" width="7" height="4" viewBox="0 0 7 4"><path d="M.5 3.700L3.500 .8L6.500 3.700" fill="none" stroke="#5a5a5a" stroke-width="1.100"/></svg>
<div class="a" style="left:4px;top:125px;width:76px;height:20px;background:#fff;border:1px solid #dedede"></div>
<svg style="left:70px;top:132.500px" width="5" height="3" viewBox="0 0 5 3"><path d="M0 0h5l-2.500 3z" fill="#666"/></svg>
<div class="a" style="left:91px;top:131px;width:1px;height:1px;background:#aaa"></div>
<div class="a" style="left:91px;top:134px;width:1px;height:1px;background:#aaa"></div>
<div class="a" style="left:91px;top:137px;width:1px;height:1px;background:#aaa"></div>
<div class="a" style="left:102px;top:125px;width:83px;height:20px;background:#fff;border:1px solid #dedede"></div>
<div class="a" style="left:187px;top:125px;width:832px;height:20px;background:#fff;border:1px solid #dedede"></div>
<svg style="left:113px;top:131px" width="8" height="8" viewBox="0 0 8 8"><path d="M.5.500L7.500 7.500M7.500.5L.5 7.500" stroke="#666" stroke-width="1.100"/></svg>
<svg style="left:139px;top:131px" width="10" height="8" viewBox="0 0 10 8"><path d="M.7 4.200L3.500 7L9.300 .8" fill="none" stroke="#666" stroke-width="1.300"/></svg>
<div class="a" style="left:166.500px;top:128px;font-family:'Liberation Serif',serif;font-style:italic;font-weight:bold;font-size:11px;line-height:13px;color:#5a5a5a;letter-spacing:-0.3px">f<span style="font-size:7.500px;position:relative;top:0.500px">x</span></div>
<div class="t" style="left:196.19px;top:130.00px;font-size:9.9px;line-height:12px;height:12px;color:#222;letter-spacing:0.155px;">=IFS(<span style="color:#3d6fc9">[@[Customer Age]]</span>&lt;20,"&lt;20")</div>
<div class="a" style="left:356px;top:128px;width:1px;height:13px;background:#333"></div>
<svg style="left:1010px;top:132.500px" width="6" height="4" viewBox="0 0 6 4"><path d="M.3.500L3 3.200L5.700.5" fill="none" stroke="#505050" stroke-width="1.100"/></svg>
<div class="a" style="left:19px;top:167px;width:988px;height:341px;background:#fff"></div>
<div class="a" style="left:0;top:152px;width:1007px;height:15px;background:#e6e6e6;border-bottom:1px solid #c6c6c6"></div>
<div class="a" style="left:75px;top:153px;width:1px;height:13px;background:#c9c9c9"></div>
<div class="ch" style="left:19px;width:57px;">A</div>
<div class="a" style="left:112px;top:153px;width:1px;height:13px;background:#c9c9c9"></div>
<div class="ch" style="left:76px;width:37px;">B</div>
<div class="a" style="left:185px;top:153px;width:1px;height:13px;background:#c9c9c9"></div>
<div class="ch" style="left:113px;width:73px;">C</div>
<div class="a" style="left:186px;top:152px;width:83px;height:15px;background:#d2d2d2;border-bottom:1px solid #217346;box-shadow:inset 0 -1px 0 rgba(33,115,70,.5)"></div>
<div class="a" style="left:268px;top:153px;width:1px;height:13px;background:#c9c9c9"></div>
<div class="ch" style="left:186px;width:83px;color:#217346;">D</div>
<div class="a" style="left:350px;top:153px;width:1px;height:13px;background:#c9c9c9"></div>
<div class="ch" style="left:269px;width:82px;">E</div>
<div class="a" style="left:448px;top:153px;width:1px;height:13px;background:#c9c9c9"></div>
<div class="ch" style="left:351px;width:98px;">F</div>
<div class="a" style="left:529px;top:153px;width:1px;height:13px;background:#c9c9c9"></div>
<div class="ch" style="left:449px;width:81px;">G</div>
<div class="a" style="left:636px;top:153px;width:1px;height:13px;background:#c9c9c9"></div>
<div class="ch" style="left:530px;width:107px;">H</div>
<div class="a" style="left:732px;top:153px;width:1px;height:13px;background:#c9c9c9"></div>
<div class="ch" style="left:637px;width:96px;">I</div>
<div class="a" style="left:819px;top:153px;width:1px;height:13px;background:#c9c9c9"></div>
<div class="ch" style="left:733px;width:87px;">J</div>
<div class="a" style="left:967px;top:153px;width:1px;height:13px;background:#c9c9c9"></div>
<div class="ch" style="left:820px;width:148px;">K</div>
<div class="a" style="left:18px;top:153px;width:1px;height:13px;background:#c9c9c9"></div>
<svg style="left:8px;top:156px" width="9" height="8" viewBox="0 0 9 8"><path d="M9 0V8H0Z" fill="#b7b7b7"/></svg>
<div class="a" style="left:19px;top:167px;width:988px;height:15px;background:#5b9bd5"></div>
<div class="t" style="left:21.02px;top:169.00px;font-size:10px;line-height:14px;height:14px;color:#fff;letter-spacing:-0.038px;font-weight:bold;">Date</div>
<div class="fb" style="left:63px;top:168px"></div>
<svg style="left:66.2px;top:173px" width="6" height="3" viewBox="0 0 6 3"><path d="M0 0h5.600l-2.800 3z" fill="#444"/></svg>
<div class="t" style="left:77.36px;top:169.00px;font-size:10px;line-height:14px;height:14px;color:#fff;letter-spacing:-0.247px;font-weight:bold;">Year</div>
<div class="fb" style="left:100px;top:168px"></div>
<svg style="left:102px;top:170.500px" width="9" height="7" viewBox="0 0 9 7"><rect x="-.5" y="-.5" width="9.500" height="8" fill="#fafafa"/><path d="M2.500 .2h6.300l-2.300 2.600v3.200h-1.700v-3.200z" fill="#4a4a4a"/><path d="M.3 4.900h3l-1.500 1.900z" fill="#4a4a4a"/></svg>
<div class="t" style="left:114.90px;top:169.00px;font-size:10px;line-height:14px;height:14px;color:#fff;letter-spacing:-0.270px;font-weight:bold;">Customer ID</div>
<div class="fb" style="left:173px;top:168px"></div>
<svg style="left:176.2px;top:173px" width="6" height="3" viewBox="0 0 6 3"><path d="M0 0h5.600l-2.800 3z" fill="#444"/></svg>
<div class="t" style="left:187.91px;top:169.00px;font-size:10px;line-height:14px;height:14px;color:#fff;letter-spacing:-0.116px;font-weight:bold;width:67.2px;overflow:hidden;">Kelompok Umur</div>
<div class="fb" style="left:256px;top:168px"></div>
<svg style="left:259.2px;top:173px" width="6" height="3" viewBox="0 0 6 3"><path d="M0 0h5.600l-2.800 3z" fill="#444"/></svg>
<div class="t" style="left:270.39px;top:169.00px;font-size:10px;line-height:14px;height:14px;color:#fff;letter-spacing:-0.277px;font-weight:bold;">Customer Age</div>
<div class="fb" style="left:338px;top:168px"></div>
<svg style="left:341.2px;top:173px" width="6" height="3" viewBox="0 0 6 3"><path d="M0 0h5.600l-2.800 3z" fill="#444"/></svg>
<div class="t" style="left:352.19px;top:169.00px;font-size:10px;line-height:14px;height:14px;color:#fff;letter-spacing:-0.144px;font-weight:bold;">Customer Gender</div>
<div class="fb" style="left:436px;top:168px"></div>
<svg style="left:439.2px;top:173px" width="6" height="3" viewBox="0 0 6 3"><path d="M0 0h5.600l-2.800 3z" fill="#444"/></svg>
<div class="t" style="left:451.00px;top:169.00px;font-size:10px;line-height:14px;height:14px;color:#fff;letter-spacing:-0.232px;font-weight:bold;">Country</div>
<div class="fb" style="left:517px;top:168px"></div>
<svg style="left:520.2px;top:173px" width="6" height="3" viewBox="0 0 6 3"><path d="M0 0h5.600l-2.800 3z" fill="#444"/></svg>
<div class="t" style="left:531.66px;top:169.00px;font-size:10px;line-height:14px;height:14px;color:#fff;letter-spacing:-0.115px;font-weight:bold;">State</div>
<div class="fb" style="left:624px;top:168px"></div>
<svg style="left:627.2px;top:173px" width="6" height="3" viewBox="0 0 6 3"><path d="M0 0h5.600l-2.800 3z" fill="#444"/></svg>
<div class="t" style="left:638.01px;top:169.00px;font-size:10px;line-height:14px;height:14px;color:#fff;letter-spacing:-0.294px;font-weight:bold;">Product Category</div>
<div class="fb" style="left:720px;top:168px"></div>
<svg style="left:723.2px;top:173px" width="6" height="3" viewBox="0 0 6 3"><path d="M0 0h5.600l-2.800 3z" fill="#444"/></svg>
<div class="t" style="left:733.96px;top:169.00px;font-size:10px;line-height:14px;height:14px;color:#fff;letter-spacing:-0.397px;font-weight:bold;">Sub Category</div>
<div class="fb" style="left:807px;top:168px"></div>
<svg style="left:810.2px;top:173px" width="6" height="3" viewBox="0 0 6 3"><path d="M0 0h5.600l-2.800 3z" fill="#444"/></svg>
<div class="t" style="left:821.31px;top:169.00px;font-size:10px;line-height:14px;height:14px;color:#fff;letter-spacing:-0.223px;font-weight:bold;">Product</div>
<div class="fb" style="left:955px;top:168px"></div>
<svg style="left:958.2px;top:173px" width="6" height="3" viewBox="0 0 6 3"><path d="M0 0h5.600l-2.800 3z" fill="#444"/></svg>
<div class="t" style="left:970.10px;top:169.00px;font-size:10px;line-height:14px;height:14px;color:#fff;letter-spacing:-0.216px;font-weight:bold;width:36.5px;overflow:hidden;">Order Q</div>
<div class="a" style="left:0;top:167px;width:19px;height:341px;background:#e6e6e6"></div>
<div class="t" style="left:6.45px;top:169.00px;font-size:10px;line-height:14px;height:14px;color:#2a2a2a;letter-spacing:0.000px;-webkit-text-stroke:0.1px #2a2a2a;">1</div>
<div class="a" style="left:0;top:181px;width:19px;height:1px;background:#f4f4f4"></div>
<div class="a" style="left:19px;top:507px;width:988px;height:1px;background:#c4c4c4"></div>
<div class="a" style="left:76px;top:507px;width:38px;height:1px;background:#fff"></div>
<div class="a" style="left:19px;top:182px;width:988px;height:14px;background:#ddebf7"></div>
<div class="a" style="left:19px;top:196px;width:988px;height:1px;background:#a9cbea"></div>
<div class="a" style="left:0;top:182px;width:19px;height:14px;background:#d2d2d2;border-right:1px solid #217346;box-shadow:inset -1px 0 0 rgba(33,115,70,.45)"></div>
<div class="a" style="left:0;top:196px;width:18px;height:1px;background:#cdcdcd"></div>
<div class="t" style="left:6.40px;top:184.00px;font-size:10px;line-height:14px;height:14px;color:#2222ee;letter-spacing:0.000px;-webkit-text-stroke:0.1px #2222ee;">5</div>
<div class="t" style="left:22.24px;top:184.00px;font-size:9.9px;line-height:14px;height:14px;color:#000;letter-spacing:0.173px;-webkit-text-stroke:0.12px #000;">23/03/2016</div>
<div class="t" style="left:89.54px;top:184.00px;font-size:9.9px;line-height:14px;height:14px;color:#000;letter-spacing:-0.387px;-webkit-text-stroke:0.12px #000;">2016</div>
<div class="t" style="left:158.04px;top:184.00px;font-size:9.9px;line-height:14px;height:14px;color:#000;letter-spacing:-0.140px;-webkit-text-stroke:0.12px #000;">11039</div>
<div class="t" style="left:351.81px;top:184.00px;font-size:9.9px;line-height:14px;height:14px;color:#000;letter-spacing:0.000px;-webkit-text-stroke:0.12px #000;">M</div>
<div class="t" style="left:450.77px;top:184.00px;font-size:9.9px;line-height:14px;height:14px;color:#000;letter-spacing:0.340px;-webkit-text-stroke:0.12px #000;">Australia</div>
<div class="t" style="left:531.14px;top:184.00px;font-size:9.9px;line-height:14px;height:14px;color:#000;letter-spacing:0.306px;-webkit-text-stroke:0.12px #000;">New South Wales</div>
<div class="t" style="left:637.77px;top:184.00px;font-size:9.9px;line-height:14px;height:14px;color:#000;letter-spacing:0.126px;-webkit-text-stroke:0.12px #000;">Accessories</div>
<div class="t" style="left:733.24px;top:184.00px;font-size:9.9px;line-height:14px;height:14px;color:#000;letter-spacing:-0.082px;-webkit-text-stroke:0.12px #000;">Bike Racks</div>
<div class="t" style="left:820.84px;top:184.00px;font-size:9.9px;line-height:14px;height:14px;color:#000;letter-spacing:0.120px;-webkit-text-stroke:0.12px #000;">Hitch Rack - 4-Bike</div>
<div class="a" style="left:75px;top:197px;width:1px;height:14px;background:#dadada"></div>
<div class="a" style="left:112px;top:197px;width:1px;height:14px;background:#dadada"></div>
<div class="a" style="left:185px;top:197px;width:1px;height:14px;background:#dadada"></div>
<div class="a" style="left:268px;top:197px;width:1px;height:14px;background:#dadada"></div>
<div class="a" style="left:350px;top:197px;width:1px;height:14px;background:#dadada"></div>
<div class="a" style="left:448px;top:197px;width:1px;height:14px;background:#dadada"></div>
<div class="a" style="left:529px;top:197px;width:1px;height:14px;background:#dadada"></div>
<div class="a" style="left:636px;top:197px;width:1px;height:14px;background:#dadada"></div>
<div class="a" style="left:732px;top:197px;width:1px;height:14px;background:#dadada"></div>
<div class="a" style="left:819px;top:197px;width:1px;height:14px;background:#dadada"></div>
<div class="a" style="left:967px;top:197px;width:1px;height:14px;background:#dadada"></div>
<div class="a" style="left:19px;top:211px;width:988px;height:1px;background:#a9cbea"></div>
<div class="a" style="left:0;top:211px;width:18px;height:1px;background:#cdcdcd"></div>
<div class="t" style="left:6.40px;top:199.00px;font-size:10px;line-height:14px;height:14px;color:#2222ee;letter-spacing:0.000px;-webkit-text-stroke:0.1px #2222ee;">7</div>
<div class="t" style="left:21.94px;top:199.00px;font-size:9.9px;line-height:14px;height:14px;color:#000;letter-spacing:0.207px;-webkit-text-stroke:0.12px #000;">15/05/2016</div>
<div class="t" style="left:89.54px;top:199.00px;font-size:9.9px;line-height:14px;height:14px;color:#000;letter-spacing:-0.387px;-webkit-text-stroke:0.12px #000;">2016</div>
<div class="t" style="left:158.04px;top:199.00px;font-size:9.9px;line-height:14px;height:14px;color:#000;letter-spacing:-0.139px;-webkit-text-stroke:0.12px #000;">11046</div>
<div class="t" style="left:336.51px;top:199.00px;font-size:9.9px;line-height:14px;height:14px;color:#000;letter-spacing:-0.185px;-webkit-text-stroke:0.12px #000;">47</div>
<div class="t" style="left:350.92px;top:199.00px;font-size:9.9px;line-height:14px;height:14px;color:#000;letter-spacing:0.000px;-webkit-text-stroke:0.12px #000;">F</div>
<div class="t" style="left:450.77px;top:199.00px;font-size:9.9px;line-height:14px;height:14px;color:#000;letter-spacing:0.340px;-webkit-text-stroke:0.12px #000;">Australia</div>
<div class="t" style="left:531.14px;top:199.00px;font-size:9.9px;line-height:14px;height:14px;color:#000;letter-spacing:0.306px;-webkit-text-stroke:0.12px #000;">New South Wales</div>
<div class="t" style="left:637.77px;top:199.00px;font-size:9.9px;line-height:14px;height:14px;color:#000;letter-spacing:0.126px;-webkit-text-stroke:0.12px #000;">Accessories</div>
<div class="t" style="left:733.24px;top:199.00px;font-size:9.9px;line-height:14px;height:14px;color:#000;letter-spacing:-0.082px;-webkit-text-stroke:0.12px #000;">Bike Racks</div>
<div class="t" style="left:820.84px;top:199.00px;font-size:9.9px;line-height:14px;height:14px;color:#000;letter-spacing:0.120px;-webkit-text-stroke:0.12px #000;">Hitch Rack - 4-Bike</div>
<div class="a" style="left:19px;top:212px;width:988px;height:14px;background:#ddebf7"></div>
<div class="a" style="left:19px;top:226px;width:988px;height:1px;background:#a9cbea"></div>
<div class="a" style="left:0;top:226px;width:18px;height:1px;background:#cdcdcd"></div>
<div class="t" style="left:6.50px;top:214.00px;font-size:10px;line-height:14px;height:14px;color:#2222ee;letter-spacing:0.000px;-webkit-text-stroke:0.1px #2222ee;">9</div>
<div class="t" style="left:22.24px;top:214.00px;font-size:9.9px;line-height:14px;height:14px;color:#000;letter-spacing:0.173px;-webkit-text-stroke:0.12px #000;">22/05/2016</div>
<div class="t" style="left:89.54px;top:214.00px;font-size:9.9px;line-height:14px;height:14px;color:#000;letter-spacing:-0.387px;-webkit-text-stroke:0.12px #000;">2016</div>
<div class="t" style="left:158.04px;top:214.00px;font-size:9.9px;line-height:14px;height:14px;color:#000;letter-spacing:-0.120px;-webkit-text-stroke:0.12px #000;">11047</div>
<div class="t" style="left:336.51px;top:214.00px;font-size:9.9px;line-height:14px;height:14px;color:#000;letter-spacing:-0.185px;-webkit-text-stroke:0.12px #000;">47</div>
<div class="t" style="left:350.92px;top:214.00px;font-size:9.9px;line-height:14px;height:14px;color:#000;letter-spacing:0.000px;-webkit-text-stroke:0.12px #000;">F</div>
<div class="t" style="left:450.77px;top:214.00px;font-size:9.9px;line-height:14px;height:14px;color:#000;letter-spacing:0.340px;-webkit-text-stroke:0.12px #000;">Australia</div>
<div class="t" style="left:531.64px;top:214.00px;font-size:9.9px;line-height:14px;height:14px;color:#000;letter-spacing:0.479px;-webkit-text-stroke:0.12px #000;">Victoria</div>
<div class="t" style="left:637.77px;top:214.00px;font-size:9.9px;line-height:14px;height:14px;color:#000;letter-spacing:0.126px;-webkit-text-stroke:0.12px #000;">Accessories</div>
<div class="t" style="left:733.24px;top:214.00px;font-size:9.9px;line-height:14px;height:14px;color:#000;letter-spacing:-0.082px;-webkit-text-stroke:0.12px #000;">Bike Racks</div>
<div class="t" style="left:820.84px;top:214.00px;font-size:9.9px;line-height:14px;height:14px;color:#000;letter-spacing:0.120px;-webkit-text-stroke:0.12px #000;">Hitch Rack - 4-Bike</div>
<div class="a" style="left:75px;top:227px;width:1px;height:14px;background:#dadada"></div>
<div class="a" style="left:112px;top:227px;width:1px;height:14px;background:#dadada"></div>
<div class="a" style="left:185px;top:227px;width:1px;height:14px;background:#dadada"></div>
<div class="a" style="left:268px;top:227px;width:1px;height:14px;background:#dadada"></div>
<div class="a" style="left:350px;top:227px;width:1px;height:14px;background:#dadada"></div>
<div class="a" style="left:448px;top:227px;width:1px;height:14px;background:#dadada"></div>
<div class="a" style="left:529px;top:227px;width:1px;height:14px;background:#dadada"></div>
<div class="a" style="left:636px;top:227px;width:1px;height:14px;background:#dadada"></div>
<div class="a" style="left:732px;top:227px;width:1px;height:14px;background:#dadada"></div>
<div class="a" style="left:819px;top:227px;width:1px;height:14px;background:#dadada"></div>
<div class="a" style="left:967px;top:227px;width:1px;height:14px;background:#dadada"></div>
<div class="a" style="left:19px;top:241px;width:988px;height:1px;background:#a9cbea"></div>
<div class="a" style="left:0;top:241px;width:18px;height:1px;background:#cdcdcd"></div>
<div class="t" style="left:3.63px;top:229.00px;font-size:10px;line-height:14px;height:14px;color:#2222ee;letter-spacing:0.600px;-webkit-text-stroke:0.1px #2222ee;">11</div>
<div class="t" style="left:22.24px;top:229.00px;font-size:9.9px;line-height:14px;height:14px;color:#000;letter-spacing:0.173px;-webkit-text-stroke:0.12px #000;">22/02/2016</div>
<div class="t" style="left:89.54px;top:229.00px;font-size:9.9px;line-height:14px;height:14px;color:#000;letter-spacing:-0.387px;-webkit-text-stroke:0.12px #000;">2016</div>
<div class="t" style="left:158.04px;top:229.00px;font-size:9.9px;line-height:14px;height:14px;color:#000;letter-spacing:-0.132px;-webkit-text-stroke:0.12px #000;">11094</div>
<div class="t" style="left:336.31px;top:229.00px;font-size:9.9px;line-height:14px;height:14px;color:#000;letter-spacing:-0.140px;-webkit-text-stroke:0.12px #000;">35</div>
<div class="t" style="left:351.81px;top:229.00px;font-size:9.9px;line-height:14px;height:14px;color:#000;letter-spacing:0.000px;-webkit-text-stroke:0.12px #000;">M</div>
<div class="t" style="left:450.77px;top:229.00px;font-size:9.9px;line-height:14px;height:14px;color:#000;letter-spacing:0.340px;-webkit-text-stroke:0.12px #000;">Australia</div>
<div class="t" style="left:531.64px;top:229.00px;font-size:9.9px;line-height:14px;height:14px;color:#000;letter-spacing:0.479px;-webkit-text-stroke:0.12px #000;">Victoria</div>
<div class="t" style="left:637.77px;top:229.00px;font-size:9.9px;line-height:14px;height:14px;color:#000;letter-spacing:0.126px;-webkit-text-stroke:0.12px #000;">Accessories</div>
<div class="t" style="left:733.24px;top:229.00px;font-size:9.9px;line-height:14px;height:14px;color:#000;letter-spacing:-0.082px;-webkit-text-stroke:0.12px #000;">Bike Racks</div>
<div class="t" style="left:820.84px;top:229.00px;font-size:9.9px;line-height:14px;height:14px;color:#000;letter-spacing:0.120px;-webkit-text-stroke:0.12px #000;">Hitch Rack - 4-Bike</div>
<div class="a" style="left:19px;top:242px;width:988px;height:14px;background:#ddebf7"></div>
<div class="a" style="left:19px;top:256px;width:988px;height:1px;background:#a9cbea"></div>
<div class="a" style="left:0;top:256px;width:18px;height:1px;background:#cdcdcd"></div>
<div class="t" style="left:3.94px;top:244.00px;font-size:10px;line-height:14px;height:14px;color:#2222ee;letter-spacing:-0.485px;-webkit-text-stroke:0.1px #2222ee;">21</div>
<div class="t" style="left:22.24px;top:244.00px;font-size:9.9px;line-height:14px;height:14px;color:#000;letter-spacing:0.173px;-webkit-text-stroke:0.12px #000;">22/01/2016</div>
<div class="t" style="left:89.54px;top:244.00px;font-size:9.9px;line-height:14px;height:14px;color:#000;letter-spacing:-0.387px;-webkit-text-stroke:0.12px #000;">2016</div>
<div class="t" style="left:158.04px;top:244.00px;font-size:9.9px;line-height:14px;height:14px;color:#000;letter-spacing:0.035px;-webkit-text-stroke:0.12px #000;">11176</div>
<div class="t" style="left:336.34px;top:244.00px;font-size:9.9px;line-height:14px;height:14px;color:#000;letter-spacing:-0.165px;-webkit-text-stroke:0.12px #000;">29</div>
<div class="t" style="left:351.81px;top:244.00px;font-size:9.9px;line-height:14px;height:14px;color:#000;letter-spacing:0.000px;-webkit-text-stroke:0.12px #000;">M</div>
<div class="t" style="left:450.39px;top:244.00px;font-size:9.9px;line-height:14px;height:14px;color:#000;letter-spacing:-0.060px;-webkit-text-stroke:0.12px #000;">Canada</div>
<div class="t" style="left:531.14px;top:244.00px;font-size:9.9px;line-height:14px;height:14px;color:#000;letter-spacing:0.343px;-webkit-text-stroke:0.12px #000;">British Columbia</div>
<div class="t" style="left:637.77px;top:244.00px;font-size:9.9px;line-height:14px;height:14px;color:#000;letter-spacing:0.126px;-webkit-text-stroke:0.12px #000;">Accessories</div>
<div class="t" style="left:733.24px;top:244.00px;font-size:9.9px;line-height:14px;height:14px;color:#000;letter-spacing:-0.082px;-webkit-text-stroke:0.12px #000;">Bike Racks</div>
<div class="t" style="left:820.84px;top:244.00px;font-size:9.9px;line-height:14px;height:14px;color:#000;letter-spacing:0.120px;-webkit-text-stroke:0.12px #000;">Hitch Rack - 4-Bike</div>
<div class="a" style="left:75px;top:257px;width:1px;height:14px;background:#dadada"></div>
<div class="a" style="left:112px;top:257px;width:1px;height:14px;background:#dadada"></div>
<div class="a" style="left:185px;top:257px;width:1px;height:14px;background:#dadada"></div>
<div class="a" style="left:268px;top:257px;width:1px;height:14px;background:#dadada"></div>
<div class="a" style="left:350px;top:257px;width:1px;height:14px;background:#dadada"></div>
<div class="a" style="left:448px;top:257px;width:1px;height:14px;background:#dadada"></div>
<div class="a" style="left:529px;top:257px;width:1px;height:14px;background:#dadada"></div>
<div class="a" style="left:636px;top:257px;width:1px;height:14px;background:#dadada"></div>
<div class="a" style="left:732px;top:257px;width:1px;height:14px;background:#dadada"></div>
<div class="a" style="left:819px;top:257px;width:1px;height:14px;background:#dadada"></div>
<div class="a" style="left:967px;top:257px;width:1px;height:14px;background:#dadada"></div>
<div class="a" style="left:19px;top:271px;width:988px;height:1px;background:#a9cbea"></div>
<div class="a" style="left:0;top:271px;width:18px;height:1px;background:#cdcdcd"></div>
<div class="t" style="left:3.94px;top:259.00px;font-size:10px;line-height:14px;height:14px;color:#2222ee;letter-spacing:-0.565px;-webkit-text-stroke:0.1px #2222ee;">23</div>
<div class="t" style="left:21.94px;top:259.00px;font-size:9.9px;line-height:14px;height:14px;color:#000;letter-spacing:0.207px;-webkit-text-stroke:0.12px #000;">17/05/2016</div>
<div class="t" style="left:89.54px;top:259.00px;font-size:9.9px;line-height:14px;height:14px;color:#000;letter-spacing:-0.387px;-webkit-text-stroke:0.12px #000;">2016</div>
<div class="t" style="left:158.04px;top:259.00px;font-size:9.9px;line-height:14px;height:14px;color:#000;letter-spacing:0.035px;-webkit-text-stroke:0.12px #000;">11176</div>
<div class="t" style="left:336.34px;top:259.00px;font-size:9.9px;line-height:14px;height:14px;color:#000;letter-spacing:-0.165px;-webkit-text-stroke:0.12px #000;">29</div>
<div class="t" style="left:351.81px;top:259.00px;font-size:9.9px;line-height:14px;height:14px;color:#000;letter-spacing:0.000px;-webkit-text-stroke:0.12px #000;">M</div>
<div class="t" style="left:450.39px;top:259.00px;font-size:9.9px;line-height:14px;height:14px;color:#000;letter-spacing:-0.060px;-webkit-text-stroke:0.12px #000;">Canada</div>
<div class="t" style="left:531.14px;top:259.00px;font-size:9.9px;line-height:14px;height:14px;color:#000;letter-spacing:0.343px;-webkit-text-stroke:0.12px #000;">British Columbia</div>
<div class="t" style="left:637.77px;top:259.00px;font-size:9.9px;line-height:14px;height:14px;color:#000;letter-spacing:0.126px;-webkit-text-stroke:0.12px #000;">Accessories</div>
<div class="t" style="left:733.24px;top:259.00px;font-size:9.9px;line-height:14px;height:14px;color:#000;letter-spacing:-0.082px;-webkit-text-stroke:0.12px #000;">Bike Racks</div>
<div class="t" style="left:820.84px;top:259.00px;font-size:9.9px;line-height:14px;height:14px;color:#000;letter-spacing:0.120px;-webkit-text-stroke:0.12px #000;">Hitch Rack - 4-Bike</div>
<div class="a" style="left:19px;top:272px;width:988px;height:14px;background:#ddebf7"></div>
<div class="a" style="left:19px;top:286px;width:988px;height:1px;background:#a9cbea"></div>
<div class="a" style="left:0;top:286px;width:18px;height:1px;background:#cdcdcd"></div>
<div class="t" style="left:3.94px;top:274.00px;font-size:10px;line-height:14px;height:14px;color:#2222ee;letter-spacing:-0.650px;-webkit-text-stroke:0.1px #2222ee;">25</div>
<div class="t" style="left:22.24px;top:274.00px;font-size:9.9px;line-height:14px;height:14px;color:#000;letter-spacing:0.173px;-webkit-text-stroke:0.12px #000;">27/03/2016</div>
<div class="t" style="left:89.54px;top:274.00px;font-size:9.9px;line-height:14px;height:14px;color:#000;letter-spacing:-0.387px;-webkit-text-stroke:0.12px #000;">2016</div>
<div class="t" style="left:158.04px;top:274.00px;font-size:9.9px;line-height:14px;height:14px;color:#000;letter-spacing:0.035px;-webkit-text-stroke:0.12px #000;">11196</div>
<div class="t" style="left:336.21px;top:274.00px;font-size:9.9px;line-height:14px;height:14px;color:#000;letter-spacing:0.100px;-webkit-text-stroke:0.12px #000;">51</div>
<div class="t" style="left:351.81px;top:274.00px;font-size:9.9px;line-height:14px;height:14px;color:#000;letter-spacing:0.000px;-webkit-text-stroke:0.12px #000;">M</div>
<div class="t" style="left:450.10px;top:274.00px;font-size:9.9px;line-height:14px;height:14px;color:#000;letter-spacing:0.311px;-webkit-text-stroke:0.12px #000;">United States</div>
<div class="t" style="left:531.52px;top:274.00px;font-size:9.9px;line-height:14px;height:14px;color:#000;letter-spacing:0.428px;-webkit-text-stroke:0.12px #000;">Oregon</div>
<div class="t" style="left:637.77px;top:274.00px;font-size:9.9px;line-height:14px;height:14px;color:#000;letter-spacing:0.126px;-webkit-text-stroke:0.12px #000;">Accessories</div>
<div class="t" style="left:733.24px;top:274.00px;font-size:9.9px;line-height:14px;height:14px;color:#000;letter-spacing:-0.082px;-webkit-text-stroke:0.12px #000;">Bike Racks</div>
<div class="t" style="left:820.84px;top:274.00px;font-size:9.9px;line-height:14px;height:14px;color:#000;letter-spacing:0.120px;-webkit-text-stroke:0.12px #000;">Hitch Rack - 4-Bike</div>
<div class="a" style="left:75px;top:287px;width:1px;height:14px;background:#dadada"></div>
<div class="a" style="left:112px;top:287px;width:1px;height:14px;background:#dadada"></div>
<div class="a" style="left:185px;top:287px;width:1px;height:14px;background:#dadada"></div>
<div class="a" style="left:268px;top:287px;width:1px;height:14px;background:#dadada"></div>
<div class="a" style="left:350px;top:287px;width:1px;height:14px;background:#dadada"></div>
<div class="a" style="left:448px;top:287px;width:1px;height:14px;background:#dadada"></div>
<div class="a" style="left:529px;top:287px;width:1px;height:14px;background:#dadada"></div>
<div class="a" style="left:636px;top:287px;width:1px;height:14px;background:#dadada"></div>
<div class="a" style="left:732px;top:287px;width:1px;height:14px;background:#dadada"></div>
<div class="a" style="left:819px;top:287px;width:1px;height:14px;background:#dadada"></div>
<div class="a" style="left:967px;top:287px;width:1px;height:14px;background:#dadada"></div>
<div class="a" style="left:19px;top:301px;width:988px;height:1px;background:#a9cbea"></div>
<div class="a" style="left:0;top:301px;width:18px;height:1px;background:#cdcdcd"></div>
<div class="t" style="left:3.87px;top:289.00px;font-size:10px;line-height:14px;height:14px;color:#2222ee;letter-spacing:-0.415px;-webkit-text-stroke:0.1px #2222ee;">31</div>
<div class="t" style="left:22.43px;top:289.00px;font-size:9.9px;line-height:14px;height:14px;color:#000;letter-spacing:0.152px;-webkit-text-stroke:0.12px #000;">02/01/2016</div>
<div class="t" style="left:89.54px;top:289.00px;font-size:9.9px;line-height:14px;height:14px;color:#000;letter-spacing:-0.387px;-webkit-text-stroke:0.12px #000;">2016</div>
<div class="t" style="left:158.04px;top:289.00px;font-size:9.9px;line-height:14px;height:14px;color:#000;letter-spacing:0.067px;-webkit-text-stroke:0.12px #000;">11211</div>
<div class="t" style="left:336.51px;top:289.00px;font-size:9.9px;line-height:14px;height:14px;color:#000;letter-spacing:-0.265px;-webkit-text-stroke:0.12px #000;">48</div>
<div class="t" style="left:350.92px;top:289.00px;font-size:9.9px;line-height:14px;height:14px;color:#000;letter-spacing:0.000px;-webkit-text-stroke:0.12px #000;">F</div>
<div class="t" style="left:450.39px;top:289.00px;font-size:9.9px;line-height:14px;height:14px;color:#000;letter-spacing:-0.060px;-webkit-text-stroke:0.12px #000;">Canada</div>
<div class="t" style="left:531.14px;top:289.00px;font-size:9.9px;line-height:14px;height:14px;color:#000;letter-spacing:0.343px;-webkit-text-stroke:0.12px #000;">British Columbia</div>
<div class="t" style="left:637.77px;top:289.00px;font-size:9.9px;line-height:14px;height:14px;color:#000;letter-spacing:0.126px;-webkit-text-stroke:0.12px #000;">Accessories</div>
<div class="t" style="left:733.24px;top:289.00px;font-size:9.9px;line-height:14px;height:14px;color:#000;letter-spacing:-0.082px;-webkit-text-stroke:0.12px #000;">Bike Racks</div>
<div class="t" style="left:820.84px;top:289.00px;font-size:9.9px;line-height:14px;height:14px;color:#000;letter-spacing:0.120px;-webkit-text-stroke:0.12px #000;">Hitch Rack - 4-Bike</div>
<div class="a" style="left:19px;top:302px;width:988px;height:14px;background:#ddebf7"></div>
<div class="a" style="left:19px;top:316px;width:988px;height:1px;background:#a9cbea"></div>
<div class="a" style="left:0;top:316px;width:18px;height:1px;background:#cdcdcd"></div>
<div class="t" style="left:3.87px;top:304.00px;font-size:10px;line-height:14px;height:14px;color:#2222ee;letter-spacing:-0.495px;-webkit-text-stroke:0.1px #2222ee;">33</div>
<div class="t" style="left:21.94px;top:304.00px;font-size:9.9px;line-height:14px;height:14px;color:#000;letter-spacing:0.207px;-webkit-text-stroke:0.12px #000;">13/03/2016</div>
<div class="t" style="left:89.54px;top:304.00px;font-size:9.9px;line-height:14px;height:14px;color:#000;letter-spacing:-0.387px;-webkit-text-stroke:0.12px #000;">2016</div>
<div class="t" style="left:158.04px;top:304.00px;font-size:9.9px;line-height:14px;height:14px;color:#000;letter-spacing:0.067px;-webkit-text-stroke:0.12px #000;">11211</div>
<div class="t" style="left:336.51px;top:304.00px;font-size:9.9px;line-height:14px;height:14px;color:#000;letter-spacing:-0.265px;-webkit-text-stroke:0.12px #000;">48</div>
<div class="t" style="left:350.92px;top:304.00px;font-size:9.9px;line-height:14px;height:14px;color:#000;letter-spacing:0.000px;-webkit-text-stroke:0.12px #000;">F</div>
<div class="t" style="left:450.39px;top:304.00px;font-size:9.9px;line-height:14px;height:14px;color:#000;letter-spacing:-0.060px;-webkit-text-stroke:0.12px #000;">Canada</div>
<div class="t" style="left:531.14px;top:304.00px;font-size:9.9px;line-height:14px;height:14px;color:#000;letter-spacing:0.343px;-webkit-text-stroke:0.12px #000;">British Columbia</div>
<div class="t" style="left:637.77px;top:304.00px;font-size:9.9px;line-height:14px;height:14px;color:#000;letter-spacing:0.126px;-webkit-text-stroke:0.12px #000;">Accessories</div>
<div class="t" style="left:733.24px;top:304.00px;font-size:9.9px;line-height:14px;height:14px;color:#000;letter-spacing:-0.082px;-webkit-text-stroke:0.12px #000;">Bike Racks</div>
<div class="t" style="left:820.84px;top:304.00px;font-size:9.9px;line-height:14px;height:14px;color:#000;letter-spacing:0.120px;-webkit-text-stroke:0.12px #000;">Hitch Rack - 4-Bike</div>
<div class="a" style="left:75px;top:317px;width:1px;height:14px;background:#dadada"></div>
<div class="a" style="left:112px;top:317px;width:1px;height:14px;background:#dadada"></div>
<div class="a" style="left:185px;top:317px;width:1px;height:14px;background:#dadada"></div>
<div class="a" style="left:268px;top:317px;width:1px;height:14px;background:#dadada"></div>
<div class="a" style="left:350px;top:317px;width:1px;height:14px;background:#dadada"></div>
<div class="a" style="left:448px;top:317px;width:1px;height:14px;background:#dadada"></div>
<div class="a" style="left:529px;top:317px;width:1px;height:14px;background:#dadada"></div>
<div class="a" style="left:636px;top:317px;width:1px;height:14px;background:#dadada"></div>
<div class="a" style="left:732px;top:317px;width:1px;height:14px;background:#dadada"></div>
<div class="a" style="left:819px;top:317px;width:1px;height:14px;background:#dadada"></div>
<div class="a" style="left:967px;top:317px;width:1px;height:14px;background:#dadada"></div>
<div class="a" style="left:19px;top:331px;width:988px;height:1px;background:#a9cbea"></div>
<div class="a" style="left:0;top:331px;width:18px;height:1px;background:#cdcdcd"></div>
<div class="t" style="left:3.87px;top:319.00px;font-size:10px;line-height:14px;height:14px;color:#2222ee;letter-spacing:-0.580px;-webkit-text-stroke:0.1px #2222ee;">35</div>
<div class="t" style="left:22.24px;top:319.00px;font-size:9.9px;line-height:14px;height:14px;color:#000;letter-spacing:0.173px;-webkit-text-stroke:0.12px #000;">23/05/2016</div>
<div class="t" style="left:89.54px;top:319.00px;font-size:9.9px;line-height:14px;height:14px;color:#000;letter-spacing:-0.387px;-webkit-text-stroke:0.12px #000;">2016</div>
<div class="t" style="left:158.04px;top:319.00px;font-size:9.9px;line-height:14px;height:14px;color:#000;letter-spacing:-0.142px;-webkit-text-stroke:0.12px #000;">11215</div>
<div class="t" style="left:336.51px;top:319.00px;font-size:9.9px;line-height:14px;height:14px;color:#000;letter-spacing:-0.185px;-webkit-text-stroke:0.12px #000;">47</div>
<div class="t" style="left:350.92px;top:319.00px;font-size:9.9px;line-height:14px;height:14px;color:#000;letter-spacing:0.000px;-webkit-text-stroke:0.12px #000;">F</div>
<div class="t" style="left:450.39px;top:319.00px;font-size:9.9px;line-height:14px;height:14px;color:#000;letter-spacing:-0.060px;-webkit-text-stroke:0.12px #000;">Canada</div>
<div class="t" style="left:531.14px;top:319.00px;font-size:9.9px;line-height:14px;height:14px;color:#000;letter-spacing:0.343px;-webkit-text-stroke:0.12px #000;">British Columbia</div>
<div class="t" style="left:637.77px;top:319.00px;font-size:9.9px;line-height:14px;height:14px;color:#000;letter-spacing:0.126px;-webkit-text-stroke:0.12px #000;">Accessories</div>
<div class="t" style="left:733.24px;top:319.00px;font-size:9.9px;line-height:14px;height:14px;color:#000;letter-spacing:-0.082px;-webkit-text-stroke:0.12px #000;">Bike Racks</div>
<div class="t" style="left:820.84px;top:319.00px;font-size:9.9px;line-height:14px;height:14px;color:#000;letter-spacing:0.120px;-webkit-text-stroke:0.12px #000;">Hitch Rack - 4-Bike</div>
<div class="a" style="left:19px;top:332px;width:988px;height:14px;background:#ddebf7"></div>
<div class="a" style="left:19px;top:346px;width:988px;height:1px;background:#a9cbea"></div>
<div class="a" style="left:0;top:346px;width:18px;height:1px;background:#cdcdcd"></div>
<div class="t" style="left:4.11px;top:334.00px;font-size:10px;line-height:14px;height:14px;color:#2222ee;letter-spacing:-0.735px;-webkit-text-stroke:0.1px #2222ee;">43</div>
<div class="t" style="left:22.20px;top:334.00px;font-size:9.9px;line-height:14px;height:14px;color:#000;letter-spacing:0.177px;-webkit-text-stroke:0.12px #000;">31/03/2016</div>
<div class="t" style="left:89.54px;top:334.00px;font-size:9.9px;line-height:14px;height:14px;color:#000;letter-spacing:-0.387px;-webkit-text-stroke:0.12px #000;">2016</div>
<div class="t" style="left:158.04px;top:334.00px;font-size:9.9px;line-height:14px;height:14px;color:#000;letter-spacing:-0.142px;-webkit-text-stroke:0.12px #000;">11295</div>
<div class="t" style="left:336.51px;top:334.00px;font-size:9.9px;line-height:14px;height:14px;color:#000;letter-spacing:-0.325px;-webkit-text-stroke:0.12px #000;">43</div>
<div class="t" style="left:350.92px;top:334.00px;font-size:9.9px;line-height:14px;height:14px;color:#000;letter-spacing:0.000px;-webkit-text-stroke:0.12px #000;">F</div>
<div class="t" style="left:450.10px;top:334.00px;font-size:9.9px;line-height:14px;height:14px;color:#000;letter-spacing:0.311px;-webkit-text-stroke:0.12px #000;">United States</div>
<div class="t" style="left:531.49px;top:334.00px;font-size:9.9px;line-height:14px;height:14px;color:#000;letter-spacing:0.367px;-webkit-text-stroke:0.12px #000;">California</div>
<div class="t" style="left:637.77px;top:334.00px;font-size:9.9px;line-height:14px;height:14px;color:#000;letter-spacing:0.126px;-webkit-text-stroke:0.12px #000;">Accessories</div>
<div class="t" style="left:733.24px;top:334.00px;font-size:9.9px;line-height:14px;height:14px;color:#000;letter-spacing:-0.082px;-webkit-text-stroke:0.12px #000;">Bike Racks</div>
<div class="t" style="left:820.84px;top:334.00px;font-size:9.9px;line-height:14px;height:14px;color:#000;letter-spacing:0.120px;-webkit-text-stroke:0.12px #000;">Hitch Rack - 4-Bike</div>
<div class="a" style="left:75px;top:347px;width:1px;height:14px;background:#dadada"></div>
<div class="a" style="left:112px;top:347px;width:1px;height:14px;background:#dadada"></div>
<div class="a" style="left:185px;top:347px;width:1px;height:14px;background:#dadada"></div>
<div class="a" style="left:268px;top:347px;width:1px;height:14px;background:#dadada"></div>
<div class="a" style="left:350px;top:347px;width:1px;height:14px;background:#dadada"></div>
<div class="a" style="left:448px;top:347px;width:1px;height:14px;background:#dadada"></div>
<div class="a" style="left:529px;top:347px;width:1px;height:14px;background:#dadada"></div>
<div class="a" style="left:636px;top:347px;width:1px;height:14px;background:#dadada"></div>
<div class="a" style="left:732px;top:347px;width:1px;height:14px;background:#dadada"></div>
<div class="a" style="left:819px;top:347px;width:1px;height:14px;background:#dadada"></div>
<div class="a" style="left:967px;top:347px;width:1px;height:14px;background:#dadada"></div>
<div class="a" style="left:19px;top:361px;width:988px;height:1px;background:#a9cbea"></div>
<div class="a" style="left:0;top:361px;width:18px;height:1px;background:#cdcdcd"></div>
<div class="t" style="left:3.71px;top:349.00px;font-size:10px;line-height:14px;height:14px;color:#2222ee;letter-spacing:-0.255px;-webkit-text-stroke:0.1px #2222ee;">71</div>
<div class="t" style="left:21.94px;top:349.00px;font-size:9.9px;line-height:14px;height:14px;color:#000;letter-spacing:0.207px;-webkit-text-stroke:0.12px #000;">19/06/2016</div>
<div class="t" style="left:89.54px;top:349.00px;font-size:9.9px;line-height:14px;height:14px;color:#000;letter-spacing:-0.387px;-webkit-text-stroke:0.12px #000;">2016</div>
<div class="t" style="left:158.04px;top:349.00px;font-size:9.9px;line-height:14px;height:14px;color:#000;letter-spacing:0.067px;-webkit-text-stroke:0.12px #000;">11711</div>
<div class="t" style="left:336.31px;top:349.00px;font-size:9.9px;line-height:14px;height:14px;color:#000;letter-spacing:-0.140px;-webkit-text-stroke:0.12px #000;">35</div>
<div class="t" style="left:351.81px;top:349.00px;font-size:9.9px;line-height:14px;height:14px;color:#000;letter-spacing:0.000px;-webkit-text-stroke:0.12px #000;">M</div>
<div class="t" style="left:450.39px;top:349.00px;font-size:9.9px;line-height:14px;height:14px;color:#000;letter-spacing:-0.060px;-webkit-text-stroke:0.12px #000;">Canada</div>
<div class="t" style="left:531.14px;top:349.00px;font-size:9.9px;line-height:14px;height:14px;color:#000;letter-spacing:0.343px;-webkit-text-stroke:0.12px #000;">British Columbia</div>
<div class="t" style="left:637.77px;top:349.00px;font-size:9.9px;line-height:14px;height:14px;color:#000;letter-spacing:0.126px;-webkit-text-stroke:0.12px #000;">Accessories</div>
<div class="t" style="left:733.24px;top:349.00px;font-size:9.9px;line-height:14px;height:14px;color:#000;letter-spacing:-0.082px;-webkit-text-stroke:0.12px #000;">Bike Racks</div>
<div class="t" style="left:820.84px;top:349.00px;font-size:9.9px;line-height:14px;height:14px;color:#000;letter-spacing:0.120px;-webkit-text-stroke:0.12px #000;">Hitch Rack - 4-Bike</div>
<div class="a" style="left:19px;top:362px;width:988px;height:14px;background:#ddebf7"></div>
<div class="a" style="left:19px;top:376px;width:988px;height:1px;background:#a9cbea"></div>
<div class="a" style="left:0;top:376px;width:18px;height:1px;background:#cdcdcd"></div>
<div class="t" style="left:3.71px;top:364.00px;font-size:10px;line-height:14px;height:14px;color:#2222ee;letter-spacing:-0.335px;-webkit-text-stroke:0.1px #2222ee;">73</div>
<div class="t" style="left:22.43px;top:364.00px;font-size:9.9px;line-height:14px;height:14px;color:#000;letter-spacing:0.152px;-webkit-text-stroke:0.12px #000;">04/03/2016</div>
<div class="t" style="left:89.54px;top:364.00px;font-size:9.9px;line-height:14px;height:14px;color:#000;letter-spacing:-0.387px;-webkit-text-stroke:0.12px #000;">2016</div>
<div class="t" style="left:158.04px;top:364.00px;font-size:9.9px;line-height:14px;height:14px;color:#000;letter-spacing:-0.138px;-webkit-text-stroke:0.12px #000;">11733</div>
<div class="t" style="left:336.31px;top:364.00px;font-size:9.9px;line-height:14px;height:14px;color:#000;letter-spacing:-0.060px;-webkit-text-stroke:0.12px #000;">38</div>
<div class="t" style="left:350.92px;top:364.00px;font-size:9.9px;line-height:14px;height:14px;color:#000;letter-spacing:0.000px;-webkit-text-stroke:0.12px #000;">F</div>
<div class="t" style="left:450.10px;top:364.00px;font-size:9.9px;line-height:14px;height:14px;color:#000;letter-spacing:0.311px;-webkit-text-stroke:0.12px #000;">United States</div>
<div class="t" style="left:531.49px;top:364.00px;font-size:9.9px;line-height:14px;height:14px;color:#000;letter-spacing:0.367px;-webkit-text-stroke:0.12px #000;">California</div>
<div class="t" style="left:637.77px;top:364.00px;font-size:9.9px;line-height:14px;height:14px;color:#000;letter-spacing:0.126px;-webkit-text-stroke:0.12px #000;">Accessories</div>
<div class="t" style="left:733.24px;top:364.00px;font-size:9.9px;line-height:14px;height:14px;color:#000;letter-spacing:-0.082px;-webkit-text-stroke:0.12px #000;">Bike Racks</div>
<div class="t" style="left:820.84px;top:364.00px;font-size:9.9px;line-height:14px;height:14px;color:#000;letter-spacing:0.120px;-webkit-text-stroke:0.12px #000;">Hitch Rack - 4-Bike</div>
<div class="a" style="left:75px;top:377px;width:1px;height:14px;background:#dadada"></div>
<div class="a" style="left:112px;top:377px;width:1px;height:14px;background:#dadada"></div>
<div class="a" style="left:185px;top:377px;width:1px;height:14px;background:#dadada"></div>
<div class="a" style="left:268px;top:377px;width:1px;height:14px;background:#dadada"></div>
<div class="a" style="left:350px;top:377px;width:1px;height:14px;background:#dadada"></div>
<div class="a" style="left:448px;top:377px;width:1px;height:14px;background:#dadada"></div>
<div class="a" style="left:529px;top:377px;width:1px;height:14px;background:#dadada"></div>
<div class="a" style="left:636px;top:377px;width:1px;height:14px;background:#dadada"></div>
<div class="a" style="left:732px;top:377px;width:1px;height:14px;background:#dadada"></div>
<div class="a" style="left:819px;top:377px;width:1px;height:14px;background:#dadada"></div>
<div class="a" style="left:967px;top:377px;width:1px;height:14px;background:#dadada"></div>
<div class="a" style="left:19px;top:391px;width:988px;height:1px;background:#a9cbea"></div>
<div class="a" style="left:0;top:391px;width:18px;height:1px;background:#cdcdcd"></div>
<div class="t" style="left:3.71px;top:379.00px;font-size:10px;line-height:14px;height:14px;color:#2222ee;letter-spacing:-0.420px;-webkit-text-stroke:0.1px #2222ee;">75</div>
<div class="t" style="left:22.20px;top:379.00px;font-size:9.9px;line-height:14px;height:14px;color:#000;letter-spacing:0.177px;-webkit-text-stroke:0.12px #000;">30/05/2016</div>
<div class="t" style="left:89.54px;top:379.00px;font-size:9.9px;line-height:14px;height:14px;color:#000;letter-spacing:-0.387px;-webkit-text-stroke:0.12px #000;">2016</div>
<div class="t" style="left:158.04px;top:379.00px;font-size:9.9px;line-height:14px;height:14px;color:#000;letter-spacing:-0.138px;-webkit-text-stroke:0.12px #000;">11733</div>
<div class="t" style="left:336.31px;top:379.00px;font-size:9.9px;line-height:14px;height:14px;color:#000;letter-spacing:-0.060px;-webkit-text-stroke:0.12px #000;">38</div>
<div class="t" style="left:350.92px;top:379.00px;font-size:9.9px;line-height:14px;height:14px;color:#000;letter-spacing:0.000px;-webkit-text-stroke:0.12px #000;">F</div>
<div class="t" style="left:450.10px;top:379.00px;font-size:9.9px;line-height:14px;height:14px;color:#000;letter-spacing:0.311px;-webkit-text-stroke:0.12px #000;">United States</div>
<div class="t" style="left:531.49px;top:379.00px;font-size:9.9px;line-height:14px;height:14px;color:#000;letter-spacing:0.367px;-webkit-text-stroke:0.12px #000;">California</div>
<div class="t" style="left:637.77px;top:379.00px;font-size:9.9px;line-height:14px;height:14px;color:#000;letter-spacing:0.126px;-webkit-text-stroke:0.12px #000;">Accessories</div>
<div class="t" style="left:733.24px;top:379.00px;font-size:9.9px;line-height:14px;height:14px;color:#000;letter-spacing:-0.082px;-webkit-text-stroke:0.12px #000;">Bike Racks</div>
<div class="t" style="left:820.84px;top:379.00px;font-size:9.9px;line-height:14px;height:14px;color:#000;letter-spacing:0.120px;-webkit-text-stroke:0.12px #000;">Hitch Rack - 4-Bike</div>
<div class="a" style="left:19px;top:392px;width:988px;height:14px;background:#ddebf7"></div>
<div class="a" style="left:19px;top:406px;width:988px;height:1px;background:#a9cbea"></div>
<div class="a" style="left:0;top:406px;width:18px;height:1px;background:#cdcdcd"></div>
<div class="t" style="left:3.71px;top:394.00px;font-size:10px;line-height:14px;height:14px;color:#2222ee;letter-spacing:-0.215px;-webkit-text-stroke:0.1px #2222ee;">77</div>
<div class="t" style="left:22.24px;top:394.00px;font-size:9.9px;line-height:14px;height:14px;color:#000;letter-spacing:0.173px;-webkit-text-stroke:0.12px #000;">28/06/2016</div>
<div class="t" style="left:89.54px;top:394.00px;font-size:9.9px;line-height:14px;height:14px;color:#000;letter-spacing:-0.387px;-webkit-text-stroke:0.12px #000;">2016</div>
<div class="t" style="left:158.04px;top:394.00px;font-size:9.9px;line-height:14px;height:14px;color:#000;letter-spacing:-0.138px;-webkit-text-stroke:0.12px #000;">11733</div>
<div class="t" style="left:336.31px;top:394.00px;font-size:9.9px;line-height:14px;height:14px;color:#000;letter-spacing:-0.060px;-webkit-text-stroke:0.12px #000;">38</div>
<div class="t" style="left:350.92px;top:394.00px;font-size:9.9px;line-height:14px;height:14px;color:#000;letter-spacing:0.000px;-webkit-text-stroke:0.12px #000;">F</div>
<div class="t" style="left:450.10px;top:394.00px;font-size:9.9px;line-height:14px;height:14px;color:#000;letter-spacing:0.311px;-webkit-text-stroke:0.12px #000;">United States</div>
<div class="t" style="left:531.49px;top:394.00px;font-size:9.9px;line-height:14px;height:14px;color:#000;letter-spacing:0.367px;-webkit-text-stroke:0.12px #000;">California</div>
<div class="t" style="left:637.77px;top:394.00px;font-size:9.9px;line-height:14px;height:14px;color:#000;letter-spacing:0.126px;-webkit-text-stroke:0.12px #000;">Accessories</div>
<div class="t" style="left:733.24px;top:394.00px;font-size:9.9px;line-height:14px;height:14px;color:#000;letter-spacing:-0.082px;-webkit-text-stroke:0.12px #000;">Bike Racks</div>
<div class="t" style="left:820.84px;top:394.00px;font-size:9.9px;line-height:14px;height:14px;color:#000;letter-spacing:0.120px;-webkit-text-stroke:0.12px #000;">Hitch Rack - 4-Bike</div>
<div class="a" style="left:75px;top:407px;width:1px;height:14px;background:#dadada"></div>
<div class="a" style="left:112px;top:407px;width:1px;height:14px;background:#dadada"></div>
<div class="a" style="left:185px;top:407px;width:1px;height:14px;background:#dadada"></div>
<div class="a" style="left:268px;top:407px;width:1px;height:14px;background:#dadada"></div>
<div class="a" style="left:350px;top:407px;width:1px;height:14px;background:#dadada"></div>
<div class="a" style="left:448px;top:407px;width:1px;height:14px;background:#dadada"></div>
<div class="a" style="left:529px;top:407px;width:1px;height:14px;background:#dadada"></div>
<div class="a" style="left:636px;top:407px;width:1px;height:14px;background:#dadada"></div>
<div class="a" style="left:732px;top:407px;width:1px;height:14px;background:#dadada"></div>
<div class="a" style="left:819px;top:407px;width:1px;height:14px;background:#dadada"></div>
<div class="a" style="left:967px;top:407px;width:1px;height:14px;background:#dadada"></div>
<div class="a" style="left:19px;top:421px;width:988px;height:1px;background:#a9cbea"></div>
<div class="a" style="left:0;top:421px;width:18px;height:1px;background:#cdcdcd"></div>
<div class="t" style="left:3.71px;top:409.00px;font-size:10px;line-height:14px;height:14px;color:#2222ee;letter-spacing:-0.415px;-webkit-text-stroke:0.1px #2222ee;">79</div>
<div class="t" style="left:21.94px;top:409.00px;font-size:9.9px;line-height:14px;height:14px;color:#000;letter-spacing:0.207px;-webkit-text-stroke:0.12px #000;">10/07/2016</div>
<div class="t" style="left:89.54px;top:409.00px;font-size:9.9px;line-height:14px;height:14px;color:#000;letter-spacing:-0.387px;-webkit-text-stroke:0.12px #000;">2016</div>
<div class="t" style="left:158.04px;top:409.00px;font-size:9.9px;line-height:14px;height:14px;color:#000;letter-spacing:-0.138px;-webkit-text-stroke:0.12px #000;">11733</div>
<div class="t" style="left:336.31px;top:409.00px;font-size:9.9px;line-height:14px;height:14px;color:#000;letter-spacing:-0.060px;-webkit-text-stroke:0.12px #000;">38</div>
<div class="t" style="left:350.92px;top:409.00px;font-size:9.9px;line-height:14px;height:14px;color:#000;letter-spacing:0.000px;-webkit-text-stroke:0.12px #000;">F</div>
<div class="t" style="left:450.10px;top:409.00px;font-size:9.9px;line-height:14px;height:14px;color:#000;letter-spacing:0.311px;-webkit-text-stroke:0.12px #000;">United States</div>
<div class="t" style="left:531.49px;top:409.00px;font-size:9.9px;line-height:14px;height:14px;color:#000;letter-spacing:0.367px;-webkit-text-stroke:0.12px #000;">California</div>
<div class="t" style="left:637.77px;top:409.00px;font-size:9.9px;line-height:14px;height:14px;color:#000;letter-spacing:0.126px;-webkit-text-stroke:0.12px #000;">Accessories</div>
<div class="t" style="left:733.24px;top:409.00px;font-size:9.9px;line-height:14px;height:14px;color:#000;letter-spacing:-0.082px;-webkit-text-stroke:0.12px #000;">Bike Racks</div>
<div class="t" style="left:820.84px;top:409.00px;font-size:9.9px;line-height:14px;height:14px;color:#000;letter-spacing:0.120px;-webkit-text-stroke:0.12px #000;">Hitch Rack - 4-Bike</div>
<div class="a" style="left:19px;top:422px;width:988px;height:14px;background:#ddebf7"></div>
<div class="a" style="left:19px;top:436px;width:988px;height:1px;background:#a9cbea"></div>
<div class="a" style="left:0;top:436px;width:18px;height:1px;background:#cdcdcd"></div>
<div class="t" style="left:3.95px;top:424.00px;font-size:10px;line-height:14px;height:14px;color:#2222ee;letter-spacing:-0.500px;-webkit-text-stroke:0.1px #2222ee;">81</div>
<div class="t" style="left:21.94px;top:424.00px;font-size:9.9px;line-height:14px;height:14px;color:#000;letter-spacing:0.207px;-webkit-text-stroke:0.12px #000;">12/03/2016</div>
<div class="t" style="left:89.54px;top:424.00px;font-size:9.9px;line-height:14px;height:14px;color:#000;letter-spacing:-0.387px;-webkit-text-stroke:0.12px #000;">2016</div>
<div class="t" style="left:158.04px;top:424.00px;font-size:9.9px;line-height:14px;height:14px;color:#000;letter-spacing:-0.294px;-webkit-text-stroke:0.12px #000;">12037</div>
<div class="t" style="left:336.21px;top:424.00px;font-size:9.9px;line-height:14px;height:14px;color:#000;letter-spacing:0.145px;-webkit-text-stroke:0.12px #000;">54</div>
<div class="t" style="left:350.92px;top:424.00px;font-size:9.9px;line-height:14px;height:14px;color:#000;letter-spacing:0.000px;-webkit-text-stroke:0.12px #000;">F</div>
<div class="t" style="left:450.77px;top:424.00px;font-size:9.9px;line-height:14px;height:14px;color:#000;letter-spacing:0.340px;-webkit-text-stroke:0.12px #000;">Australia</div>
<div class="t" style="left:531.52px;top:424.00px;font-size:9.9px;line-height:14px;height:14px;color:#000;letter-spacing:0.372px;-webkit-text-stroke:0.12px #000;">Queensland</div>
<div class="t" style="left:637.77px;top:424.00px;font-size:9.9px;line-height:14px;height:14px;color:#000;letter-spacing:0.126px;-webkit-text-stroke:0.12px #000;">Accessories</div>
<div class="t" style="left:733.24px;top:424.00px;font-size:9.9px;line-height:14px;height:14px;color:#000;letter-spacing:-0.082px;-webkit-text-stroke:0.12px #000;">Bike Racks</div>
<div class="t" style="left:820.84px;top:424.00px;font-size:9.9px;line-height:14px;height:14px;color:#000;letter-spacing:0.120px;-webkit-text-stroke:0.12px #000;">Hitch Rack - 4-Bike</div>
<div class="a" style="left:75px;top:437px;width:1px;height:14px;background:#dadada"></div>
<div class="a" style="left:112px;top:437px;width:1px;height:14px;background:#dadada"></div>
<div class="a" style="left:185px;top:437px;width:1px;height:14px;background:#dadada"></div>
<div class="a" style="left:268px;top:437px;width:1px;height:14px;background:#dadada"></div>
<div class="a" style="left:350px;top:437px;width:1px;height:14px;background:#dadada"></div>
<div class="a" style="left:448px;top:437px;width:1px;height:14px;background:#dadada"></div>
<div class="a" style="left:529px;top:437px;width:1px;height:14px;background:#dadada"></div>
<div class="a" style="left:636px;top:437px;width:1px;height:14px;background:#dadada"></div>
<div class="a" style="left:732px;top:437px;width:1px;height:14px;background:#dadada"></div>
<div class="a" style="left:819px;top:437px;width:1px;height:14px;background:#dadada"></div>
<div class="a" style="left:967px;top:437px;width:1px;height:14px;background:#dadada"></div>
<div class="a" style="left:19px;top:451px;width:988px;height:1px;background:#a9cbea"></div>
<div class="a" style="left:0;top:451px;width:18px;height:1px;background:#cdcdcd"></div>
<div class="t" style="left:3.95px;top:439.00px;font-size:10px;line-height:14px;height:14px;color:#2222ee;letter-spacing:-0.665px;-webkit-text-stroke:0.1px #2222ee;">85</div>
<div class="t" style="left:22.24px;top:439.00px;font-size:9.9px;line-height:14px;height:14px;color:#000;letter-spacing:0.173px;-webkit-text-stroke:0.12px #000;">26/03/2016</div>
<div class="t" style="left:89.54px;top:439.00px;font-size:9.9px;line-height:14px;height:14px;color:#000;letter-spacing:-0.387px;-webkit-text-stroke:0.12px #000;">2016</div>
<div class="t" style="left:158.04px;top:439.00px;font-size:9.9px;line-height:14px;height:14px;color:#000;letter-spacing:0.067px;-webkit-text-stroke:0.12px #000;">12111</div>
<div class="t" style="left:336.51px;top:439.00px;font-size:9.9px;line-height:14px;height:14px;color:#000;letter-spacing:-0.185px;-webkit-text-stroke:0.12px #000;">47</div>
<div class="t" style="left:350.92px;top:439.00px;font-size:9.9px;line-height:14px;height:14px;color:#000;letter-spacing:0.000px;-webkit-text-stroke:0.12px #000;">F</div>
<div class="t" style="left:450.10px;top:439.00px;font-size:9.9px;line-height:14px;height:14px;color:#000;letter-spacing:0.311px;-webkit-text-stroke:0.12px #000;">United States</div>
<div class="t" style="left:531.49px;top:439.00px;font-size:9.9px;line-height:14px;height:14px;color:#000;letter-spacing:0.367px;-webkit-text-stroke:0.12px #000;">California</div>
<div class="t" style="left:637.77px;top:439.00px;font-size:9.9px;line-height:14px;height:14px;color:#000;letter-spacing:0.126px;-webkit-text-stroke:0.12px #000;">Accessories</div>
<div class="t" style="left:733.24px;top:439.00px;font-size:9.9px;line-height:14px;height:14px;color:#000;letter-spacing:-0.082px;-webkit-text-stroke:0.12px #000;">Bike Racks</div>
<div class="t" style="left:820.84px;top:439.00px;font-size:9.9px;line-height:14px;height:14px;color:#000;letter-spacing:0.120px;-webkit-text-stroke:0.12px #000;">Hitch Rack - 4-Bike</div>
<div class="a" style="left:19px;top:452px;width:988px;height:14px;background:#ddebf7"></div>
<div class="a" style="left:19px;top:466px;width:988px;height:1px;background:#a9cbea"></div>
<div class="a" style="left:0;top:466px;width:18px;height:1px;background:#cdcdcd"></div>
<div class="t" style="left:3.95px;top:454.00px;font-size:10px;line-height:14px;height:14px;color:#2222ee;letter-spacing:-0.460px;-webkit-text-stroke:0.1px #2222ee;">87</div>
<div class="t" style="left:22.43px;top:454.00px;font-size:9.9px;line-height:14px;height:14px;color:#000;letter-spacing:0.152px;-webkit-text-stroke:0.12px #000;">04/05/2016</div>
<div class="t" style="left:89.54px;top:454.00px;font-size:9.9px;line-height:14px;height:14px;color:#000;letter-spacing:-0.387px;-webkit-text-stroke:0.12px #000;">2016</div>
<div class="t" style="left:158.04px;top:454.00px;font-size:9.9px;line-height:14px;height:14px;color:#000;letter-spacing:0.067px;-webkit-text-stroke:0.12px #000;">12111</div>
<div class="t" style="left:336.51px;top:454.00px;font-size:9.9px;line-height:14px;height:14px;color:#000;letter-spacing:-0.185px;-webkit-text-stroke:0.12px #000;">47</div>
<div class="t" style="left:350.92px;top:454.00px;font-size:9.9px;line-height:14px;height:14px;color:#000;letter-spacing:0.000px;-webkit-text-stroke:0.12px #000;">F</div>
<div class="t" style="left:450.10px;top:454.00px;font-size:9.9px;line-height:14px;height:14px;color:#000;letter-spacing:0.311px;-webkit-text-stroke:0.12px #000;">United States</div>
<div class="t" style="left:531.49px;top:454.00px;font-size:9.9px;line-height:14px;height:14px;color:#000;letter-spacing:0.367px;-webkit-text-stroke:0.12px #000;">California</div>
<div class="t" style="left:637.77px;top:454.00px;font-size:9.9px;line-height:14px;height:14px;color:#000;letter-spacing:0.126px;-webkit-text-stroke:0.12px #000;">Accessories</div>
<div class="t" style="left:733.24px;top:454.00px;font-size:9.9px;line-height:14px;height:14px;color:#000;letter-spacing:-0.082px;-webkit-text-stroke:0.12px #000;">Bike Racks</div>
<div class="t" style="left:820.84px;top:454.00px;font-size:9.9px;line-height:14px;height:14px;color:#000;letter-spacing:0.120px;-webkit-text-stroke:0.12px #000;">Hitch Rack - 4-Bike</div>
<div class="a" style="left:75px;top:467px;width:1px;height:14px;background:#dadada"></div>
<div class="a" style="left:112px;top:467px;width:1px;height:14px;background:#dadada"></div>
<div class="a" style="left:185px;top:467px;width:1px;height:14px;background:#dadada"></div>
<div class="a" style="left:268px;top:467px;width:1px;height:14px;background:#dadada"></div>
<div class="a" style="left:350px;top:467px;width:1px;height:14px;background:#dadada"></div>
<div class="a" style="left:448px;top:467px;width:1px;height:14px;background:#dadada"></div>
<div class="a" style="left:529px;top:467px;width:1px;height:14px;background:#dadada"></div>
<div class="a" style="left:636px;top:467px;width:1px;height:14px;background:#dadada"></div>
<div class="a" style="left:732px;top:467px;width:1px;height:14px;background:#dadada"></div>
<div class="a" style="left:819px;top:467px;width:1px;height:14px;background:#dadada"></div>
<div class="a" style="left:967px;top:467px;width:1px;height:14px;background:#dadada"></div>
<div class="a" style="left:19px;top:481px;width:988px;height:1px;background:#a9cbea"></div>
<div class="a" style="left:0;top:481px;width:18px;height:1px;background:#cdcdcd"></div>
<div class="t" style="left:3.95px;top:469.00px;font-size:10px;line-height:14px;height:14px;color:#2222ee;letter-spacing:-0.660px;-webkit-text-stroke:0.1px #2222ee;">89</div>
<div class="t" style="left:22.43px;top:469.00px;font-size:9.9px;line-height:14px;height:14px;color:#000;letter-spacing:0.152px;-webkit-text-stroke:0.12px #000;">04/02/2016</div>
<div class="t" style="left:89.54px;top:469.00px;font-size:9.9px;line-height:14px;height:14px;color:#000;letter-spacing:-0.387px;-webkit-text-stroke:0.12px #000;">2016</div>
<div class="t" style="left:158.04px;top:469.00px;font-size:9.9px;line-height:14px;height:14px;color:#000;letter-spacing:-0.120px;-webkit-text-stroke:0.12px #000;">12117</div>
<div class="t" style="left:336.51px;top:469.00px;font-size:9.9px;line-height:14px;height:14px;color:#000;letter-spacing:-0.330px;-webkit-text-stroke:0.12px #000;">46</div>
<div class="t" style="left:351.81px;top:469.00px;font-size:9.9px;line-height:14px;height:14px;color:#000;letter-spacing:0.000px;-webkit-text-stroke:0.12px #000;">M</div>
<div class="t" style="left:450.10px;top:469.00px;font-size:9.9px;line-height:14px;height:14px;color:#000;letter-spacing:0.311px;-webkit-text-stroke:0.12px #000;">United States</div>
<div class="t" style="left:531.68px;top:469.00px;font-size:9.9px;line-height:14px;height:14px;color:#000;letter-spacing:0.482px;-webkit-text-stroke:0.12px #000;">Washington</div>
<div class="t" style="left:637.77px;top:469.00px;font-size:9.9px;line-height:14px;height:14px;color:#000;letter-spacing:0.126px;-webkit-text-stroke:0.12px #000;">Accessories</div>
<div class="t" style="left:733.24px;top:469.00px;font-size:9.9px;line-height:14px;height:14px;color:#000;letter-spacing:-0.082px;-webkit-text-stroke:0.12px #000;">Bike Racks</div>
<div class="t" style="left:820.84px;top:469.00px;font-size:9.9px;line-height:14px;height:14px;color:#000;letter-spacing:0.120px;-webkit-text-stroke:0.12px #000;">Hitch Rack - 4-Bike</div>
<div class="a" style="left:19px;top:482px;width:988px;height:14px;background:#ddebf7"></div>
<div class="a" style="left:19px;top:496px;width:988px;height:1px;background:#a9cbea"></div>
<div class="a" style="left:0;top:496px;width:18px;height:1px;background:#cdcdcd"></div>
<div class="t" style="left:4.01px;top:484.00px;font-size:10px;line-height:14px;height:14px;color:#2222ee;letter-spacing:-0.635px;-webkit-text-stroke:0.1px #2222ee;">93</div>
<div class="t" style="left:21.94px;top:484.00px;font-size:9.9px;line-height:14px;height:14px;color:#000;letter-spacing:0.207px;-webkit-text-stroke:0.12px #000;">12/02/2016</div>
<div class="t" style="left:89.54px;top:484.00px;font-size:9.9px;line-height:14px;height:14px;color:#000;letter-spacing:-0.387px;-webkit-text-stroke:0.12px #000;">2016</div>
<div class="t" style="left:158.04px;top:484.00px;font-size:9.9px;line-height:14px;height:14px;color:#000;letter-spacing:-0.140px;-webkit-text-stroke:0.12px #000;">12119</div>
<div class="t" style="left:336.51px;top:484.00px;font-size:9.9px;line-height:14px;height:14px;color:#000;letter-spacing:-0.330px;-webkit-text-stroke:0.12px #000;">46</div>
<div class="t" style="left:351.81px;top:484.00px;font-size:9.9px;line-height:14px;height:14px;color:#000;letter-spacing:0.000px;-webkit-text-stroke:0.12px #000;">M</div>
<div class="t" style="left:450.10px;top:484.00px;font-size:9.9px;line-height:14px;height:14px;color:#000;letter-spacing:0.311px;-webkit-text-stroke:0.12px #000;">United States</div>
<div class="t" style="left:531.49px;top:484.00px;font-size:9.9px;line-height:14px;height:14px;color:#000;letter-spacing:0.367px;-webkit-text-stroke:0.12px #000;">California</div>
<div class="t" style="left:637.77px;top:484.00px;font-size:9.9px;line-height:14px;height:14px;color:#000;letter-spacing:0.126px;-webkit-text-stroke:0.12px #000;">Accessories</div>
<div class="t" style="left:733.24px;top:484.00px;font-size:9.9px;line-height:14px;height:14px;color:#000;letter-spacing:-0.082px;-webkit-text-stroke:0.12px #000;">Bike Racks</div>
<div class="t" style="left:820.84px;top:484.00px;font-size:9.9px;line-height:14px;height:14px;color:#000;letter-spacing:0.120px;-webkit-text-stroke:0.12px #000;">Hitch Rack - 4-Bike</div>
<div class="a" style="left:75px;top:497px;width:1px;height:14px;background:#dadada"></div>
<div class="a" style="left:112px;top:497px;width:1px;height:14px;background:#dadada"></div>
<div class="a" style="left:185px;top:497px;width:1px;height:14px;background:#dadada"></div>
<div class="a" style="left:268px;top:497px;width:1px;height:14px;background:#dadada"></div>
<div class="a" style="left:350px;top:497px;width:1px;height:14px;background:#dadada"></div>
<div class="a" style="left:448px;top:497px;width:1px;height:14px;background:#dadada"></div>
<div class="a" style="left:529px;top:497px;width:1px;height:14px;background:#dadada"></div>
<div class="a" style="left:636px;top:497px;width:1px;height:14px;background:#dadada"></div>
<div class="a" style="left:732px;top:497px;width:1px;height:14px;background:#dadada"></div>
<div class="a" style="left:819px;top:497px;width:1px;height:14px;background:#dadada"></div>
<div class="a" style="left:967px;top:497px;width:1px;height:14px;background:#dadada"></div>
<div class="a" style="left:19px;top:511px;width:988px;height:1px;background:#a9cbea"></div>
<div class="a" style="left:0;top:511px;width:18px;height:1px;background:#cdcdcd"></div>
<div class="t" style="left:4.01px;top:499.00px;font-size:10px;line-height:14px;height:14px;color:#2222ee;letter-spacing:-0.720px;-webkit-text-stroke:0.1px #2222ee;">95</div>
<div class="t" style="left:21.94px;top:499.00px;font-size:9.9px;line-height:14px;height:14px;color:#000;letter-spacing:0.207px;-webkit-text-stroke:0.12px #000;">17/05/2016</div>
<div class="t" style="left:89.54px;top:499.00px;font-size:9.9px;line-height:14px;height:14px;color:#000;letter-spacing:-0.387px;-webkit-text-stroke:0.12px #000;">2016</div>
<div class="t" style="left:158.04px;top:499.00px;font-size:9.9px;line-height:14px;height:14px;color:#000;letter-spacing:-0.140px;-webkit-text-stroke:0.12px #000;">12119</div>
<div class="t" style="left:336.51px;top:499.00px;font-size:9.9px;line-height:14px;height:14px;color:#000;letter-spacing:-0.330px;-webkit-text-stroke:0.12px #000;">46</div>
<div class="t" style="left:351.81px;top:499.00px;font-size:9.9px;line-height:14px;height:14px;color:#000;letter-spacing:0.000px;-webkit-text-stroke:0.12px #000;">M</div>
<div class="t" style="left:450.10px;top:499.00px;font-size:9.9px;line-height:14px;height:14px;color:#000;letter-spacing:0.311px;-webkit-text-stroke:0.12px #000;">United States</div>
<div class="t" style="left:531.49px;top:499.00px;font-size:9.9px;line-height:14px;height:14px;color:#000;letter-spacing:0.367px;-webkit-text-stroke:0.12px #000;">California</div>
<div class="t" style="left:637.77px;top:499.00px;font-size:9.9px;line-height:14px;height:14px;color:#000;letter-spacing:0.126px;-webkit-text-stroke:0.12px #000;">Accessories</div>
<div class="t" style="left:733.24px;top:499.00px;font-size:9.9px;line-height:14px;height:14px;color:#000;letter-spacing:-0.082px;-webkit-text-stroke:0.12px #000;">Bike Racks</div>
<div class="t" style="left:820.84px;top:499.00px;font-size:9.9px;line-height:14px;height:14px;color:#000;letter-spacing:0.120px;-webkit-text-stroke:0.12px #000;">Hitch Rack - 4-Bike</div>
<div class="a" style="left:185px;top:181px;width:166px;height:16px;background:#e3eef9;border:1px solid #4a78c8"></div>
<div class="a" style="left:185px;top:181px;width:84px;height:16px;border:1px solid #217346;border-right:none;box-shadow:inset 1px 0 0 rgba(33,115,70,.55),inset 0 1px 0 rgba(33,115,70,.35),inset 0 -1px 0 rgba(33,115,70,.35)"></div>
<div class="a" style="left:267px;top:195px;width:3px;height:3px;background:#217346;border:0"></div>
<div class="t" style="left:187.69px;top:184.00px;font-size:9.9px;line-height:14px;height:14px;color:#000;letter-spacing:0.155px;-webkit-text-stroke:0.12px #000;">=IFS([@[Customer Age]]&lt;20,&quot;&lt;20&quot;)</div>
<div class="a" style="left:1007px;top:152px;width:16px;height:356px;background:#e6e6e6"></div>
<div class="a" style="left:1009px;top:153px;width:12px;height:12px;background:#fff;border:1px solid #b9b9b9"></div>
<div class="a" style="left:1009px;top:164px;width:12px;height:14px;background:#fff;border:1px solid #b9b9b9"></div>
<div class="a" style="left:1009px;top:178px;width:12px;height:319px;background:#dcdcdc"></div>
<div class="a" style="left:1009px;top:497px;width:12px;height:11px;background:#fff;border:1px solid #b9b9b9"></div>
<div class="a" style="left:1006px;top:167px;width:1px;height:341px;background:#c4c4c4"></div>
<svg style="left:1012.500px;top:157px" width="5" height="3" viewBox="0 0 5 3"><path d="M0 3L2.500 0L5 3Z" fill="#555"/></svg>
<svg style="left:1012.500px;top:501px" width="5" height="3" viewBox="0 0 5 3"><path d="M0 0L2.500 3L5 0Z" fill="#555"/></svg>
<div class="a" style="left:0;top:508px;width:1023px;height:20px;background:#e6e6e6"></div>
<svg style="left:20px;top:515px" width="4" height="6" viewBox="0 0 4 6"><path d="M4 0V6L.5 3z" fill="#c3c3c3"/></svg>
<svg style="left:41.500px;top:515px" width="4" height="6" viewBox="0 0 4 6"><path d="M0 0V6L3.500 3z" fill="#c3c3c3"/></svg>
<div class="a" style="left:75px;top:508px;width:40px;height:19px;background:#fff;border-left:1px solid #cfcfcf;border-right:1px solid #cfcfcf;border-bottom:2px solid #217346"></div>
<div class="t" style="left:84.12px;top:513.00px;font-size:10px;line-height:12px;height:12px;color:#217346;letter-spacing:-0.040px;font-weight:bold;">Data</div>
<svg style="left:139px;top:512px" width="12" height="12" viewBox="0 0 12 12"><circle cx="6" cy="6" r="5.500" fill="none" stroke="#c9c9c9"/><path d="M3.500 6h5M6 3.500v5" stroke="#c9c9c9"/></svg>
<div class="a" style="left:614px;top:515px;width:1px;height:1px;background:#aaa"></div>
<div class="a" style="left:614px;top:518px;width:1px;height:1px;background:#aaa"></div>
<div class="a" style="left:614px;top:521px;width:1px;height:1px;background:#aaa"></div>
<div class="a" style="left:626px;top:513px;width:383px;height:11px;background:#d9d9d9"></div>
<div class="a" style="left:626px;top:513px;width:12px;height:11px;background:#fff;border:1px solid #b5b5b5"></div>
<div class="a" style="left:637px;top:513px;width:247px;height:11px;background:#fff;border:1px solid #b5b5b5"></div>
<div class="a" style="left:997px;top:513px;width:12px;height:11px;background:#fff;border:1px solid #b5b5b5"></div>
<svg style="left:630px;top:516px" width="4" height="5" viewBox="0 0 4 5"><path d="M3.500 0V5L.5 2.500z" fill="#555"/></svg>
<svg style="left:1001.500px;top:516px" width="4" height="5" viewBox="0 0 4 5"><path d="M.5 0V5L3.500 2.500z" fill="#555"/></svg>
<div class="a" style="left:0;top:528px;width:1023px;height:17px;background:#f3f3f3;border-top:1px solid #e0e0e0"></div>
<div class="t" style="left:5.64px;top:530.00px;font-size:9px;line-height:12px;height:12px;color:#444;letter-spacing:0.028px;">Edit</div>
<div class="t" style="left:40.81px;top:530.00px;font-size:9px;line-height:12px;height:12px;color:#444;letter-spacing:-0.172px;">29398 of 113036 records found</div>
<svg style="left:818px;top:531px" width="10" height="10" viewBox="0 0 10 10"><rect x=".5" y=".5" width="9" height="9" fill="none" stroke="#a9a9a9"/><path d="M3.500 .5v9M6.500 .5v9M.5 3.500h9M.5 6.500h9" stroke="#a9a9a9"/></svg>
<svg style="left:846px;top:531px" width="11" height="10" viewBox="0 0 11 10"><rect x=".5" y=".5" width="10" height="9" fill="none" stroke="#a9a9a9"/><rect x="2.500" y="2.500" width="6" height="5" fill="none" stroke="#a9a9a9"/><path d="M4.500 5h2" stroke="#a9a9a9"/></svg>
<svg style="left:875px;top:531px" width="10" height="10" viewBox="0 0 10 10"><rect x=".5" y=".5" width="9" height="9" fill="none" stroke="#a9a9a9"/><path d="M.5 6.500h9 M3.500 .5v6M6.500 .5v6" stroke="#a9a9a9"/></svg>
<div class="a" style="left:898px;top:536px;width:5px;height:1px;background:#555;box-shadow:0 1px 0 rgba(85,85,85,.35)"></div>
<div class="a" style="left:905px;top:537px;width:75px;height:1px;background:#bdbdbd"></div>
<div class="a" style="left:943px;top:535px;width:1px;height:5px;background:#bdbdbd"></div>
<svg style="left:982.500px;top:533.500px" width="6" height="6" viewBox="0 0 6 6"><path d="M0 3h6M3 0v6" stroke="#555" stroke-width="1"/></svg>
<div class="t" style="left:996.50px;top:530.00px;font-size:9px;line-height:12px;height:12px;color:#b5b5b5;letter-spacing:-0.800px;">100%</div>
<div class="a" style="left:0;top:545px;width:1023px;height:30px;background:#0b181e"></div>
<div class="a" style="left:333px;top:573px;width:30px;height:2px;background:#8cc4ea"></div>
<div class="a" style="left:407px;top:573px;width:30px;height:2px;background:#8cc4ea"></div>
<div class="a" style="left:517px;top:573px;width:30px;height:2px;background:#8cc4ea"></div>
<div class="a" style="left:590px;top:573px;width:30px;height:2px;background:#8cc4ea"></div>
<div class="a" style="left:663px;top:573px;width:30px;height:2px;background:#8cc4ea"></div>
<div class="a" style="left:700px;top:573px;width:30px;height:2px;background:#8cc4ea"></div>
<div class="a" style="left:624px;top:545px;width:36px;height:30px;background:#38444c"></div>
<div class="a" style="left:624px;top:573px;width:36px;height:2px;background:#9acdf0"></div>
<svg style="left:11.7px;top:553.8px" width="12.7" height="12.1" viewBox="0 0 127 121"><path d="M0 17L52 10V58H0z M58 9L127 0V58H58z M0 64H52V112L0 105z M58 64H127V121L58 112z" fill="#fff"/></svg>
<svg style="left:47px;top:552.5px" width="14" height="14" viewBox="0 0 14 14"><circle cx="9" cy="5.300" r="3.900" fill="none" stroke="#fff" stroke-width="1.200"/><path d="M6.200 8.200L1 13.500" stroke="#fff" stroke-width="1.400"/></svg>
<svg style="left:83.5px;top:554px" width="13" height="12" viewBox="0 0 13 12"><path d="M1 0v12M8 0v12" stroke="#fff" stroke-width="1.100"/><rect x="1" y="2.500" width="7" height="6" fill="none" stroke="#fff" stroke-width="1.200"/><path d="M1 11h7" stroke="#fff" stroke-width="1.100"/><path d="M11.500 2v10" stroke="#fff" stroke-width="1.100"/><rect x="10.700" y="3" width="1.800" height="1.800" fill="#fff"/></svg>
<svg style="left:119px;top:551.3px" width="18.5" height="16.5" viewBox="0 0 185 165"><path d="M0 62L92 0L185 62V165H0z" fill="#2d6fbe"/><path d="M22 55H163V120H22z" fill="#fff"/><path d="M0 62L92 118L185 62V165H0z" fill="#29a2ea"/></svg>
<svg style="left:155.7px;top:550.5px" width="17.2" height="17.5" viewBox="0 0 172 175"><path d="M58 45V30a28 28 0 0 1 56 0V45" fill="none" stroke="#fff" stroke-width="9"/><path d="M0 40H172V160a12 12 0 0 1-12 12H12a12 12 0 0 1-12-12z" fill="#fff"/><rect x="42" y="68" width="40" height="36" fill="#f25022"/><rect x="90" y="68" width="40" height="36" fill="#7fba00"/><rect x="42" y="110" width="40" height="36" fill="#00a4ef"/><rect x="90" y="110" width="40" height="36" fill="#ffb900"/></svg>
<svg style="left:192.3px;top:553.8px" width="18.7" height="13.1" viewBox="0 0 187 131"><path d="M0 18H50L62 0H120L132 18H187V131H0z" fill="#fff"/><circle cx="93" cy="66" r="40" fill="#0b181e"/><circle cx="93" cy="66" r="26" fill="none" stroke="#fff" stroke-width="0"/><path d="M125 92a42 42 0 0 1-50 14" fill="none" stroke="#fff" stroke-width="5"/><rect x="150" y="30" width="14" height="10" fill="#0b181e"/></svg>
<svg style="left:231.2px;top:550.9px" width="14" height="18.1" viewBox="0 0 140 181"><rect x="0" y="0" width="140" height="181" fill="#fff"/><rect x="18" y="18" width="104" height="30" fill="#0b181e"/><rect x="22" y="68" width="20" height="18" fill="#0b181e"/><rect x="60" y="68" width="20" height="18" fill="#0b181e"/><rect x="98" y="68" width="20" height="18" fill="#0b181e"/><rect x="22" y="104" width="20" height="18" fill="#0b181e"/><rect x="60" y="104" width="20" height="18" fill="#0b181e"/><rect x="98" y="104" width="20" height="18" fill="#0b181e"/><rect x="22" y="140" width="20" height="18" fill="#0b181e"/><rect x="60" y="140" width="20" height="18" fill="#0b181e"/><rect x="98" y="140" width="20" height="18" fill="#0b181e"/></svg>
<svg style="left:266px;top:550px" width="17.5" height="18.5" viewBox="0 0 175 185"><defs><linearGradient id="ffg" x1="0.7" y1="0" x2="0.3" y2="1"><stop offset="0" stop-color="#ffe14a"/><stop offset=".35" stop-color="#ff9a1f"/><stop offset=".7" stop-color="#f5383e"/><stop offset="1" stop-color="#e31d6b"/></linearGradient></defs><path d="M118 0C128 18 150 28 162 58C176 92 168 130 140 156C112 180 66 182 36 160C4 136 -6 96 8 62C12 52 18 44 22 40C22 50 26 56 32 58C34 40 48 28 58 24C56 34 60 42 68 46C84 36 112 30 118 0z" fill="url(#ffg)"/><circle cx="82" cy="100" r="44" fill="#7542e5"/><path d="M50 84C66 62 104 60 124 84C108 78 92 84 82 96C74 88 62 84 50 84z" fill="#ff9a1f"/><circle cx="78" cy="112" r="22" fill="#5a5cf0"/><path d="M40 120C52 150 96 160 124 136C104 146 62 146 40 120z" fill="#f5383e"/></svg>
<svg style="left:303px;top:551px" width="16.5" height="17.5" viewBox="0 0 165 175"><ellipse cx="82" cy="87" rx="82" ry="87" fill="#e0161f"/><ellipse cx="82" cy="87" rx="38" ry="62" fill="#0b181e"/></svg>
<svg style="left:340.2px;top:553.2px" width="16.3" height="13.4" viewBox="0 0 163 134"><path d="M0 10H60L72 22H163V134H0z" fill="#f8d58a"/><path d="M0 10H50V22H0z" fill="#e8b53a"/><path d="M30 80H133V134H105V104H58V134H30z" fill="#2b9ae6"/><path d="M30 80H133V92H30z" fill="#56b6f0"/></svg>
<div class="a" style="left:377px;top:551px;width:16px;height:15px;background:#1a1a58;border:1px solid #8fb0ea"></div>
<div class="t" style="left:378.78px;top:554.00px;font-size:9.6px;line-height:12px;height:12px;color:#a4c2f2;letter-spacing:0.520px;-webkit-text-stroke:0.25px #a4c2f2;">Ps</div>
<svg style="left:412.5px;top:550.5px" width="17" height="17" viewBox="0 0 170 170"><circle cx="85" cy="85" r="82" fill="#e33b2e"/><path d="M85 85L14 44A82 82 0 0 0 60 163z" fill="#2da94f"/><path d="M85 85L60 163A82 82 0 0 0 158 48z" fill="#fdbd00"/><path d="M85 85L158 48A82 82 0 0 0 14 44z" fill="#e33b2e"/><circle cx="85" cy="85" r="38" fill="#fff"/><circle cx="85" cy="85" r="30" fill="#4a8af4"/></svg>
<svg style="left:421.5px;top:559.5px" width="10.5" height="10.5" viewBox="0 0 105 105"><circle cx="52" cy="52" r="52" fill="#5da33a"/><rect x="45" y="42" width="14" height="38" fill="#cfe6b8"/><rect x="45" y="22" width="14" height="13" fill="#cfe6b8"/></svg>
<svg style="left:450.2px;top:551.3px" width="16.2" height="14.8" viewBox="0 0 162 148"><rect width="162" height="148" fill="#c8161c"/><path d="M40 128C55 100 75 60 78 25C80 10 90 12 90 28C88 60 110 90 140 96C150 98 148 106 138 104C100 98 70 105 40 128z" fill="none" stroke="#f5e6dc" stroke-width="9"/></svg>
<svg style="left:487.3px;top:551.3px" width="16" height="17.1" viewBox="0 0 160 171"><path d="M0 8L70 0V70L0 72z" fill="#c4242c"/><path d="M82 0L160 -6V66L82 68z" fill="#3cb84c"/><path d="M0 88L70 86V160L0 152z" fill="#bcb222"/><path d="M82 84L160 82V171L82 162z" fill="#5a2ad0"/></svg>
<svg style="left:522.8px;top:550.9px" width="18.2" height="18.1" viewBox="0 0 182 181"><rect width="182" height="181" rx="36" fill="#08c408"/><path d="M91 38C130 38 160 62 160 92C160 122 125 146 91 160C98 148 96 146 80 144C46 140 22 120 22 92C22 62 52 38 91 38z" fill="#fff"/></svg>
<div class="t" style="left:526.13px;top:556.00px;font-size:4.6px;line-height:12px;height:12px;color:#08b408;letter-spacing:0.438px;font-weight:bold;">LINE</div>
<svg style="left:561.2px;top:551.3px" width="14" height="17.1" viewBox="0 0 140 171"><path d="M0 40L85 0L140 16V152L85 171L0 135L85 145V30L35 46V118L0 135z" fill="#d4301c"/><path d="M85 0L140 16V152L85 171z" fill="#ea5a1e"/></svg>
<svg style="left:596.5px;top:551.8px" width="17" height="17" viewBox="0 0 170 170"><path d="M85 0A83 83 0 1 1 42 156L4 168L16 130A83 83 0 0 1 85 0z" fill="#e9f3ea"/><circle cx="85" cy="83" r="68" fill="#35c244"/><path d="M62 48C55 50 50 62 58 78C68 98 84 112 102 118C114 122 122 112 122 106L104 96L96 104C84 98 74 88 70 78L78 70L70 50z" fill="#fff"/></svg>
<div class="a" style="left:603px;top:558px;width:13px;height:13px;border-radius:7px;background:#e8121c"></div>
<div class="t" style="left:604.44px;top:559.00px;font-size:9px;line-height:12px;height:12px;color:#fff;letter-spacing:0.295px;">36</div>
<svg style="left:632.6px;top:551.6px" width="18.8" height="16.2" viewBox="0 0 188 162"><path d="M50 0H188V162H50z" fill="#1f8a4c"/><path d="M119 0H188V40H119z" fill="#35b878"/><path d="M50 0H119V40H50z" fill="#23a560"/><path d="M119 40H188V81H119z" fill="#23a560"/><path d="M119 81H188V121H119z" fill="#1b7f45"/><path d="M50 121H188V162H50z" fill="#17683a"/><rect x="0" y="36" width="92" height="92" fill="#116b3a"/><path d="M24 56L68 110M68 56L24 110" stroke="#fff" stroke-width="14"/></svg>
<svg style="left:669.6px;top:551px" width="17" height="17.5" viewBox="0 0 170 175"><path d="M75 40C120 30 150 55 150 95C150 140 110 165 70 165C60 165 58 150 65 145C72 138 60 128 45 130C10 135 -5 105 10 80C22 58 45 45 75 40z" fill="#b9d9f1"/><circle cx="35" cy="95" r="11" fill="#d8362a"/><circle cx="58" cy="70" r="11" fill="#4caa3c"/><circle cx="88" cy="60" r="11" fill="#f0c020"/><circle cx="70" cy="110" r="12" fill="#1c2c44"/><path d="M150 5L165 25L92 168L80 160z" fill="#e88a2a"/><path d="M140 0L168 20L160 38L138 22z" fill="#f2c89a"/></svg>
<svg style="left:706.8px;top:551.6px" width="17.1" height="16.6" viewBox="0 0 171 166"><rect x="3" y="3" width="165" height="160" fill="#0a0f12" stroke="#fff" stroke-width="7"/><path d="M3 163V110L60 45L100 100L122 70L168 125V163z" fill="#fff"/></svg>
<svg style="left:863.2px;top:557.3px" width="9.6" height="5.3" viewBox="0 0 96 53"><path d="M4 50L48 6L92 50" fill="none" stroke="#fff" stroke-width="11"/></svg>
<svg style="left:879.5px;top:556px" width="12.7" height="8.2" viewBox="0 0 127 82"><rect x="22" y="22" width="96" height="50" fill="none" stroke="#fff" stroke-width="8"/><rect x="118" y="36" width="9" height="22" fill="#fff"/><rect x="30" y="30" width="30" height="34" fill="#fff"/><path d="M14 0V30M4 8V20M24 8V20M4 20H24M14 30C14 44 24 46 30 46" fill="none" stroke="#fff" stroke-width="7"/></svg>
<svg style="left:900.2px;top:555.8px" width="9.5" height="9.5" viewBox="0 0 95 95"><path d="M5 90A85 85 0 0 1 90 5" fill="none" stroke="#8b9398" stroke-width="8"/><path d="M30 90A60 60 0 0 1 90 30" fill="none" stroke="#8b9398" stroke-width="8"/><path d="M55 90A35 35 0 0 1 90 55" fill="none" stroke="#aab0b4" stroke-width="8"/><rect x="74" y="74" width="18" height="18" fill="#fff"/></svg>
<svg style="left:915.8px;top:554.8px" width="12.5" height="10.5" viewBox="0 0 125 105"><path d="M4 36H26L54 8V97L26 69H4z" fill="none" stroke="#fff" stroke-width="8"/><path d="M72 34A26 26 0 0 1 72 71" fill="none" stroke="#fff" stroke-width="8"/><path d="M88 18A48 48 0 0 1 88 87" fill="none" stroke="#fff" stroke-width="8"/><path d="M104 4A70 70 0 0 1 104 101" fill="none" stroke="#dfe3e6" stroke-width="7"/></svg>
<div class="t" style="left:946.21px;top:547.00px;font-size:9px;line-height:12px;height:12px;color:#fff;letter-spacing:-0.376px;">23.02</div>
<div class="t" style="left:935.11px;top:561.00px;font-size:9px;line-height:12px;height:12px;color:#fff;letter-spacing:-0.151px;">29/02/2020</div>
<svg style="left:992.6px;top:554.2px" width="11.8" height="11.5" viewBox="0 0 118 115"><path d="M0 0H118V88H74L59 108L44 88H0z" fill="#fff"/><path d="M18 20H100M18 38H100M18 56H70" stroke="#0b181e" stroke-width="8"/></svg>
<div class="a" style="left:1020px;top:545px;width:1px;height:30px;background:#5a656b"></div>
</div></body></html>
